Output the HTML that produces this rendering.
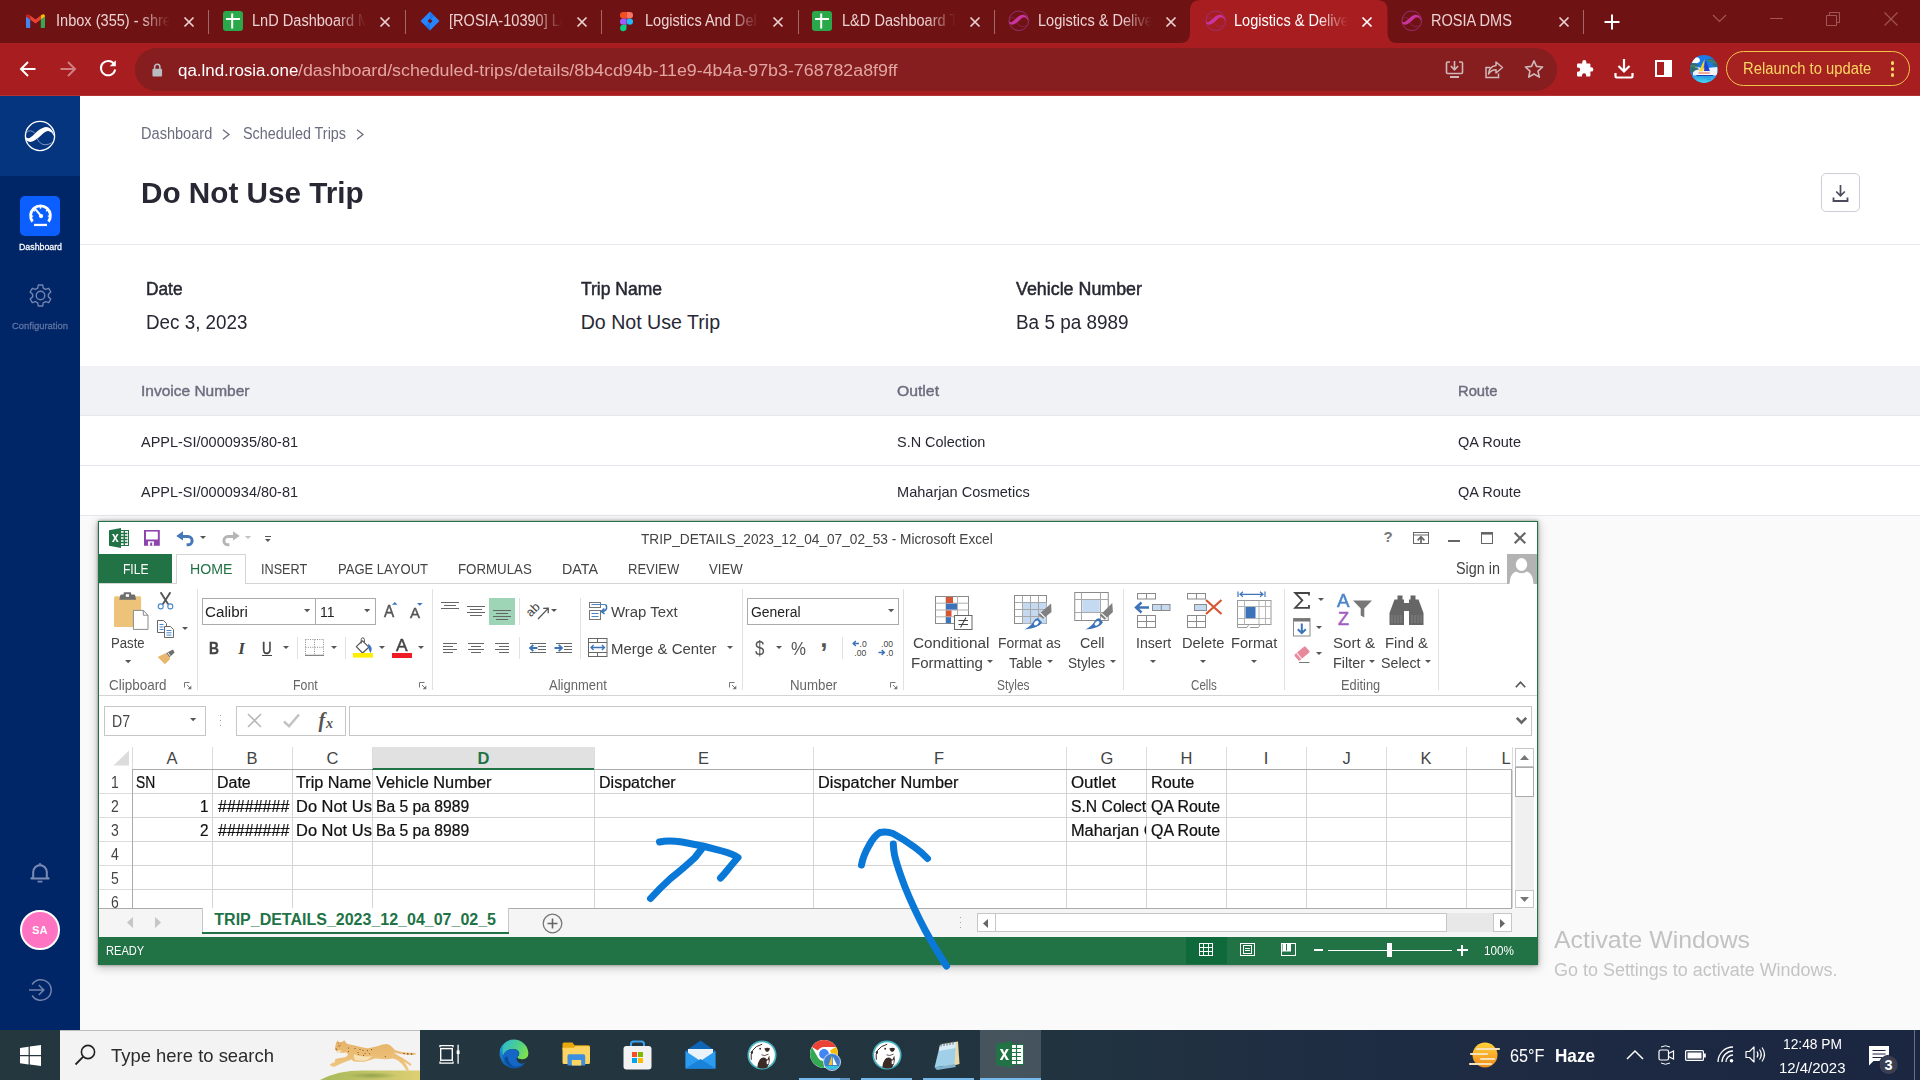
<!DOCTYPE html>
<html><head><meta charset="utf-8"><title>Do Not Use Trip</title>
<style>
html,body{margin:0;padding:0}
body{width:1920px;height:1080px;overflow:hidden;position:relative;background:#fff;font-family:"Liberation Sans",sans-serif;}
.a{position:absolute;display:block}
.t{position:absolute;white-space:pre;line-height:1;display:block}
svg{overflow:visible}
svg text{font-family:"Liberation Sans",sans-serif}
</style></head>
<body>
<div class="a" style="left:0px;top:96px;width:1920px;height:934px;background:#ffffff;"></div>
<div class="a" style="left:80px;top:516px;width:1840px;height:514px;background:#fafafa;"></div>
<div class="a" style="left:0px;top:96px;width:80px;height:934px;background:#002667;"></div>
<div class="a" style="left:0px;top:96px;width:80px;height:80px;background:#06357f;"></div>
<svg class="a" style="left:24px;top:119.9px" width="32" height="32" viewBox="0 0 32 32"><circle cx="16" cy="16" r="14.6" stroke="#fff" stroke-width="1.3" fill="none"/><path d="M1.3 16.5 Q3 19 5.5 18 Q8 16.8 11 13.5 Q15.5 8.5 20.6 7.2 Q26 6.5 29 11.8 Q30 14 30.1 16 L29.2 15.1 Q28.5 12 24.3 10.9 Q21.5 10.8 18 14.5 Q14 18.5 10.4 20.6 Q6 23.2 2.6 20.6 Q1.3 19 1.3 16.5Z" fill="#fff"/><path d="M2.6 12.3 Q6 9 10.9 13" stroke="#fff" stroke-width="0.6" fill="none" opacity="0.8"/><path d="M13.2 18.8 Q16 24.5 21 24.8 Q25 24.6 27.6 22.9" stroke="#fff" stroke-width="0.6" fill="none" opacity="0.8"/></svg>
<div class="a" style="left:20px;top:196px;width:40px;height:40px;background:#0b5fff;border-radius:5px;"></div>
<svg class="a" style="left:26.6px;top:202.3px" width="27" height="27" viewBox="0 0 24 24"><path d="M4.9 17.4 A8.8 8.8 0 1 1 19.1 17.4" stroke="#fff" stroke-width="2.5" fill="none"/><path d="M6.2 20.4 H17.8" stroke="#fff" stroke-width="2" fill="none"/><path d="M12.3 12.2 L7.8 6.8" stroke="#fff" stroke-width="1.8" fill="none" stroke-linecap="round"/><circle cx="12.5" cy="12.5" r="1.9" fill="#fff"/><path d="M12 4.2 V6 M5.8 7 L7 8.2 M18.2 7 L17 8.2 M3.8 12.5 H5.5 M20.2 12.5 H18.5" stroke="#fff" stroke-width="1.2" fill="none"/></svg>
<span class="t" style="left:18.50px;top:239px;font-size:9.8px;line-height:15px;color:#ffffff;-webkit-text-stroke:0.27px #ffffff;transform:scaleX(0.8970);transform-origin:0 0;">Dashboard</span>
<svg class="a" style="left:26.5px;top:281.6px" width="27" height="27" viewBox="0 0 24 24"><g stroke="#7283ad" stroke-width="1.25" fill="none" stroke-linejoin="round"><path d="M10.1 1.2 H13.9 L14.5 4.1 L16.5 5.2 L19.3 4.2 L21.2 7.5 L19 9.5 V11.8 L21.2 13.7 L19.3 17 L16.5 16 L14.5 17.1 L13.9 20 H10.1 L9.5 17.1 L7.5 16 L4.7 17 L2.8 13.7 L5 11.8 V9.5 L2.8 7.5 L4.7 4.2 L7.5 5.2 L9.5 4.1 Z" transform="translate(0,1.4)"/><circle cx="12" cy="12" r="3.8"/></g></svg>
<span class="t" style="left:12.00px;top:318px;font-size:9.4px;line-height:15px;color:#6074a3;-webkit-text-stroke:0.26px #6074a3;transform:scaleX(1.0042);transform-origin:0 0;">Configuration</span>
<svg class="a" style="left:30px;top:862px" width="20" height="22" viewBox="0 0 20 22"><path d="M3.2 15 V10 A6.8 6.8 0 0 1 16.8 10 V15 L18.6 16.6 H1.4 Z" stroke="#7b8bb3" stroke-width="2" fill="none" stroke-linejoin="round"/><path d="M7.5 19.6 H12.5" stroke="#7283ad" stroke-width="1.8" fill="none"/><circle cx="10" cy="2.2" r="1.2" fill="#7283ad"/></svg>
<div class="a" style="left:20px;top:910px;width:40px;height:40px;background:#ff73c3;border-radius:50%;border:2px solid #fff;box-sizing:border-box;"></div>
<span class="t" style="left:32.30px;top:922px;font-size:11.5px;line-height:16px;color:#ffffff;font-weight:700;transform:scaleX(0.9760);transform-origin:0 0;">SA</span>
<svg class="a" style="left:28px;top:978px" width="24" height="24" viewBox="0 0 24 24"><path d="M4.2 6.5 A10.3 10.3 0 1 1 4.2 17.5" stroke="#7283ad" stroke-width="1.5" fill="none"/><path d="M1 12 H15.5 M10.8 7 L15.8 12 L10.8 17" stroke="#7283ad" stroke-width="1.5" fill="none"/></svg>
<span class="t" style="left:140.50px;top:123px;font-size:16px;line-height:21px;color:#6b6c7e;transform:scaleX(0.9108);transform-origin:0 0;">Dashboard</span>
<svg class="a" style="left:222px;top:129px" width="9" height="11" viewBox="0 0 9 11"><path d="M1 0.8 L7 5.5 L1 10.2" stroke="#6b6c7e" stroke-width="1.3" fill="none"/></svg>
<span class="t" style="left:242.50px;top:123px;font-size:16px;line-height:21px;color:#6b6c7e;transform:scaleX(0.8977);transform-origin:0 0;">Scheduled Trips</span>
<svg class="a" style="left:356px;top:129px" width="9" height="11" viewBox="0 0 9 11"><path d="M1 0.8 L7 5.5 L1 10.2" stroke="#6b6c7e" stroke-width="1.3" fill="none"/></svg>
<span class="t" style="left:141.30px;top:175px;font-size:29px;line-height:36px;color:#272833;font-weight:700;transform:scaleX(1.0238);transform-origin:0 0;">Do Not Use Trip</span>
<div class="a" style="left:1821px;top:173px;width:39px;height:39px;background:#fff;border:1px solid #cdced9;border-radius:5px;box-sizing:border-box;"></div>
<svg class="a" style="left:1832px;top:184px" width="17" height="19" viewBox="0 0 17 19"><path d="M8.5 1 V11.5 M4.2 7.5 L8.5 11.8 L12.8 7.5" stroke="#4b4c5b" stroke-width="1.7" fill="none"/><path d="M1.5 13.5 V17 H15.5 V13.5" stroke="#4b4c5b" stroke-width="1.8" fill="none"/></svg>
<div class="a" style="left:80px;top:244px;width:1840px;height:1px;background:#e7e7ed;"></div>
<span class="t" style="left:145.50px;top:277px;font-size:18px;line-height:24px;color:#272833;-webkit-text-stroke:0.50px #272833;transform:scaleX(0.9597);transform-origin:0 0;">Date</span>
<span class="t" style="left:145.50px;top:309px;font-size:19.6px;line-height:26px;color:#272833;transform:scaleX(0.9605);transform-origin:0 0;">Dec 3, 2023</span>
<span class="t" style="left:580.70px;top:277px;font-size:18px;line-height:24px;color:#272833;-webkit-text-stroke:0.50px #272833;transform:scaleX(0.9717);transform-origin:0 0;">Trip Name</span>
<span class="t" style="left:580.70px;top:309px;font-size:19.6px;line-height:26px;color:#272833;">Do Not Use Trip</span>
<span class="t" style="left:1015.70px;top:277px;font-size:18px;line-height:24px;color:#272833;-webkit-text-stroke:0.50px #272833;transform:scaleX(0.9915);transform-origin:0 0;">Vehicle Number</span>
<span class="t" style="left:1015.70px;top:309px;font-size:19.6px;line-height:26px;color:#272833;transform:scaleX(0.9659);transform-origin:0 0;">Ba 5 pa 8989</span>
<div class="a" style="left:80px;top:366px;width:1840px;height:49px;background:#f1f2f5;"></div>
<div class="a" style="left:80px;top:415px;width:1840px;height:1px;background:#e7e7ed;"></div>
<div class="a" style="left:80px;top:465px;width:1840px;height:1px;background:#e7e7ed;"></div>
<div class="a" style="left:80px;top:515px;width:1840px;height:1px;background:#e7e7ed;"></div>
<span class="t" style="left:141.30px;top:381px;font-size:14.6px;line-height:20px;color:#6b6c7e;-webkit-text-stroke:0.41px #6b6c7e;transform:scaleX(1.0616);transform-origin:0 0;">Invoice Number</span>
<span class="t" style="left:897.30px;top:381px;font-size:14.6px;line-height:20px;color:#6b6c7e;-webkit-text-stroke:0.41px #6b6c7e;transform:scaleX(1.0787);transform-origin:0 0;">Outlet</span>
<span class="t" style="left:1458.10px;top:381px;font-size:14.6px;line-height:20px;color:#6b6c7e;-webkit-text-stroke:0.41px #6b6c7e;transform:scaleX(1.0115);transform-origin:0 0;">Route</span>
<span class="t" style="left:141.30px;top:432px;font-size:14.8px;line-height:20px;color:#272833;transform:scaleX(0.9787);transform-origin:0 0;">APPL-SI/0000935/80-81</span>
<span class="t" style="left:897.30px;top:432px;font-size:14.8px;line-height:20px;color:#272833;transform:scaleX(0.9771);transform-origin:0 0;">S.N Colection</span>
<span class="t" style="left:1458.10px;top:432px;font-size:14.8px;line-height:20px;color:#272833;transform:scaleX(0.9817);transform-origin:0 0;">QA Route</span>
<span class="t" style="left:141.30px;top:482px;font-size:14.8px;line-height:20px;color:#272833;transform:scaleX(0.9787);transform-origin:0 0;">APPL-SI/0000934/80-81</span>
<span class="t" style="left:897.30px;top:482px;font-size:14.8px;line-height:20px;color:#272833;transform:scaleX(0.9839);transform-origin:0 0;">Maharjan Cosmetics</span>
<span class="t" style="left:1458.10px;top:482px;font-size:14.8px;line-height:20px;color:#272833;transform:scaleX(0.9817);transform-origin:0 0;">QA Route</span>
<span class="t" style="left:1554.30px;top:924px;font-size:24.5px;line-height:31px;color:#c2c2c2;transform:scaleX(1.0137);transform-origin:0 0;">Activate Windows</span>
<span class="t" style="left:1554.30px;top:958px;font-size:18px;line-height:24px;color:#c4c4c4;transform:scaleX(0.9977);transform-origin:0 0;">Go to Settings to activate Windows.</span>
<div class="a" style="left:98px;top:521px;width:1440px;height:444px;background:#ffffff;box-shadow:0 0 3px rgba(0,0,0,0.42),0 2px 9px 1px rgba(0,0,0,0.22);border:1px solid #217346;box-sizing:border-box;"></div>
<svg class="a" style="left:108.5px;top:528px" width="21" height="20" viewBox="0 0 21 20"><rect x="9" y="2.5" width="10.5" height="15" fill="#fff" stroke="#217346" stroke-width="1"/><path d="M12 5.5 H18.5 M12 8.5 H18.5 M12 11.5 H18.5 M12 14.5 H18.5 M15.3 3 V17" stroke="#217346" stroke-width="1.35" fill="none"/><path d="M0 2.2 L12 0 V20 L0 17.8 Z" fill="#217346"/><path d="M3 6 L5 6 L6.3 8.8 L7.7 6 L9.6 6 L7.3 10 L9.7 14 L7.7 14 L6.3 11.2 L4.9 14 L2.9 14 L5.3 10 Z" fill="#fff"/></svg>
<svg class="a" style="left:144.2px;top:530px" width="15.8" height="15.8" viewBox="0 0 16 16"><path d="M0 0 H16 V16 H0 Z" fill="#8e44ad"/><rect x="2" y="1.6" width="12" height="8" fill="#fff"/><rect x="4" y="11.5" width="6" height="4.5" fill="#fff"/><rect x="6.3" y="12.8" width="2" height="3.2" fill="#8e44ad"/></svg>
<svg class="a" style="left:176px;top:529.7px" width="19" height="18" viewBox="0 0 19 18"><path d="M5 6.6 H12 A4.1 4.1 0 0 1 12 14.8 H10.6" stroke="#4478b8" stroke-width="3" fill="none"/><path d="M0.25 6 L7 1.3 V10.6 Z" fill="#4478b8"/></svg>
<svg class="a" style="left:200.0px;top:535.8px" width="6.0" height="3.1" viewBox="0 0 7 3.6"><path d="M0 0 H7 L3.5 3.6 Z" fill="#555"/></svg>
<svg class="a" style="left:220.5px;top:529.7px" width="19" height="18" viewBox="0 0 19 18"><path d="M14 6.6 H7 A4.1 4.1 0 0 0 7 14.8 H8.4" stroke="#b5b5b5" stroke-width="3" fill="none"/><path d="M18.75 6 L12 1.3 V10.6 Z" fill="#b5b5b5"/></svg>
<svg class="a" style="left:245.0px;top:535.8px" width="6.0" height="3.1" viewBox="0 0 7 3.6"><path d="M0 0 H7 L3.5 3.6 Z" fill="#c0c0c0"/></svg>
<div class="a" style="left:265px;top:536px;width:6px;height:1px;background:#555;"></div>
<svg class="a" style="left:265.2px;top:539.1px" width="5.6" height="2.9" viewBox="0 0 7 3.6"><path d="M0 0 H7 L3.5 3.6 Z" fill="#555"/></svg>
<span class="t" style="left:640.80px;top:528px;font-size:15.2px;line-height:21px;color:#444444;transform:scaleX(0.9004);transform-origin:0 0;">TRIP_DETAILS_2023_12_04_07_02_53 - Microsoft Excel</span>
<span class="t" style="left:1383.50px;top:526px;font-size:15px;line-height:21px;color:#777;font-weight:700;">?</span>
<svg class="a" style="left:1413px;top:532px" width="16" height="12" viewBox="0 0 16 12"><rect x="0.5" y="0.5" width="15" height="11" stroke="#666" fill="none"/><path d="M0.5 3 H15.5" stroke="#666" fill="none"/><path d="M8 11 V5 M4.6 8.3 L8 4.8 L11.4 8.3" stroke="#666" stroke-width="1.7" fill="none"/></svg>
<div class="a" style="left:1448px;top:540px;width:12px;height:2px;background:#666;"></div>
<svg class="a" style="left:1481px;top:532px" width="12" height="12" viewBox="0 0 12 12"><rect x="0.5" y="0.5" width="11" height="11" stroke="#666" fill="none"/><rect x="0" y="0" width="12" height="2.6" fill="#666"/></svg>
<svg class="a" style="left:1514px;top:532px" width="12" height="12" viewBox="0 0 12 12"><path d="M0.7 0.7 L11.3 11.3 M11.3 0.7 L0.7 11.3" stroke="#666" stroke-width="2.2" fill="none"/></svg>
<div class="a" style="left:99px;top:554px;width:73px;height:29px;background:#217346;"></div>
<span class="t" style="left:122.50px;top:558px;font-size:15.4px;line-height:21px;color:#fff;transform:scaleX(0.7842);transform-origin:0 0;">FILE</span>
<div class="a" style="left:99px;top:583px;width:1438px;height:1px;background:#d4d4d4;"></div>
<div class="a" style="left:176px;top:554px;width:70px;height:30px;background:#fff;border:1px solid #d4d4d4;border-bottom:none;box-sizing:border-box;"></div>
<span class="t" style="left:189.50px;top:558px;font-size:15.4px;line-height:21px;color:#217346;transform:scaleX(0.9202);transform-origin:0 0;">HOME</span>
<span class="t" style="left:261.30px;top:558px;font-size:15.4px;line-height:21px;color:#444444;transform:scaleX(0.8225);transform-origin:0 0;">INSERT</span>
<span class="t" style="left:337.50px;top:558px;font-size:15.4px;line-height:21px;color:#444444;transform:scaleX(0.8463);transform-origin:0 0;">PAGE LAYOUT</span>
<span class="t" style="left:457.50px;top:558px;font-size:15.4px;line-height:21px;color:#444444;transform:scaleX(0.8630);transform-origin:0 0;">FORMULAS</span>
<span class="t" style="left:561.50px;top:558px;font-size:15.4px;line-height:21px;color:#444444;transform:scaleX(0.9287);transform-origin:0 0;">DATA</span>
<span class="t" style="left:627.50px;top:558px;font-size:15.4px;line-height:21px;color:#444444;transform:scaleX(0.8449);transform-origin:0 0;">REVIEW</span>
<span class="t" style="left:708.80px;top:558px;font-size:15.4px;line-height:21px;color:#444444;transform:scaleX(0.8566);transform-origin:0 0;">VIEW</span>
<span class="t" style="left:1455.50px;top:558px;font-size:15.6px;line-height:21px;color:#444444;transform:scaleX(0.9227);transform-origin:0 0;">Sign in</span>
<svg class="a" style="left:1507px;top:554px" width="30" height="30" viewBox="0 0 30 30"><rect width="30" height="30" fill="#b3b3b3"/><ellipse cx="14.5" cy="10.5" rx="5.7" ry="6.5" fill="#fff"/><path d="M2.5 30 Q3 19.5 9 17.5 Q14.5 21 20 17.5 Q26 19.5 26.5 30 Z" fill="#fff"/></svg>
<div class="a" style="left:99px;top:695px;width:1438px;height:1px;background:#d4d4d4;"></div>
<svg class="a" style="left:113px;top:591px" width="37" height="40" viewBox="0 0 37 40"><rect x="1" y="5.3" width="27.1" height="30.6" rx="1.5" fill="#ecc379"/><path d="M6.3 8.8 L7.3 4.2 Q7.5 3.5 8.2 3.5 H10.6 V2 Q10.6 1.2 11.4 1.2 H17.3 Q18.1 1.2 18.1 2 V3.5 H21.2 Q21.9 3.5 22.1 4.2 L23.1 8.8 Z" fill="#6e6e6e"/><rect x="12.8" y="3.2" width="3.2" height="2.6" fill="#fff"/><path d="M20.4 19.4 H30.3 L35 24.2 V38.4 H20.4 Z" fill="#fff" stroke="#8a8a8a" stroke-width="1"/><path d="M30.3 19.4 V24.2 H35" fill="none" stroke="#8a8a8a" stroke-width="1"/></svg>
<span class="t" style="left:110.80px;top:632px;font-size:15.2px;line-height:21px;color:#444444;transform:scaleX(0.8650);transform-origin:0 0;">Paste</span>
<svg class="a" style="left:124.8px;top:659.7px" width="6.3" height="3.2" viewBox="0 0 7 3.6"><path d="M0 0 H7 L3.5 3.6 Z" fill="#555"/></svg>
<svg class="a" style="left:157px;top:592px" width="17" height="18" viewBox="0 0 17 18"><path d="M3.6 0.3 L11.2 12.3 M13.4 0.3 L5.8 12.3" stroke="#555" stroke-width="1.9" fill="none"/><circle cx="3.7" cy="14.4" r="2.5" stroke="#4a86c8" stroke-width="1.1" fill="none"/><circle cx="13.3" cy="14.4" r="2.5" stroke="#4a86c8" stroke-width="1.1" fill="none"/></svg>
<svg class="a" style="left:157px;top:620px" width="18" height="19" viewBox="0 0 18 19"><path d="M0.5 0.5 H6.5 L9.5 3.5 V12.5 H0.5 Z" fill="#fff" stroke="#666" stroke-width="1"/><path d="M2.5 4.5 H6.5 M2.5 7 H6.5 M2.5 9.5 H6.5" stroke="#4a86c8" stroke-width="1" fill="none"/><path d="M7.5 6.5 H13.5 L16.5 9.5 V17.5 H7.5 Z" fill="#fff" stroke="#666" stroke-width="1"/><path d="M9.5 10.5 H14.5 M9.5 12.8 H14.5 M9.5 15.1 H14.5" stroke="#4a86c8" stroke-width="1" fill="none"/></svg>
<svg class="a" style="left:182.0px;top:627.3px" width="6.0" height="3.1" viewBox="0 0 7 3.6"><path d="M0 0 H7 L3.5 3.6 Z" fill="#555"/></svg>
<svg class="a" style="left:157px;top:649px" width="19" height="16" viewBox="157 649 19 16"><path d="M166.1 653.1 L173 649.4 L174.6 652.5 L169.3 657.6 Z" fill="#6e6e6e"/><path d="M167.6 652.2 L170.4 656.4" stroke="#fff" stroke-width="0.9"/><path d="M157.7 656.9 L166.1 653.1 L170.4 658.7 L164.9 664.2 Z" fill="#e9b66e"/></svg>
<span class="t" style="left:108.70px;top:675px;font-size:14.3px;line-height:20px;color:#666666;transform:scaleX(0.9411);transform-origin:0 0;">Clipboard</span>
<svg class="a" style="left:184.0px;top:682.3px" width="8" height="8" viewBox="0 0 8 8"><path d="M0.5 5.5 V0.5 H5.5" stroke="#777" stroke-width="1" fill="none"/><path d="M3 3 L6 6" stroke="#777" stroke-width="1" fill="none"/><path d="M7.3 3.6 V7.3 H3.6 Z" fill="#777"/></svg>
<div class="a" style="left:197px;top:589px;width:1px;height:101px;background:#e1e1e1;"></div>
<div class="a" style="left:202px;top:598px;width:114px;height:27px;background:#fff;border:1px solid #ababab;box-sizing:border-box;"></div>
<div class="a" style="left:315px;top:598px;width:61px;height:27px;background:#fff;border:1px solid #ababab;box-sizing:border-box;"></div>
<span class="t" style="left:205.00px;top:601px;font-size:15.4px;line-height:21px;color:#222;transform:scaleX(0.9857);transform-origin:0 0;">Calibri</span>
<svg class="a" style="left:304.4px;top:609.2px" width="6.3" height="3.2" viewBox="0 0 7 3.6"><path d="M0 0 H7 L3.5 3.6 Z" fill="#555"/></svg>
<span class="t" style="left:320.00px;top:601px;font-size:15.4px;line-height:21px;color:#222;transform:scaleX(0.9071);transform-origin:0 0;">11</span>
<svg class="a" style="left:364.4px;top:609.2px" width="6.3" height="3.2" viewBox="0 0 7 3.6"><path d="M0 0 H7 L3.5 3.6 Z" fill="#555"/></svg>
<span class="t" style="left:384.30px;top:601px;font-size:15.8px;line-height:21px;color:#555;-webkit-text-stroke:0.44px #555;transform:scaleX(0.9671);transform-origin:0 0;">A</span>
<svg class="a" style="left:392.3px;top:602.2px" width="5.6" height="2.8" viewBox="0 0 6 3"><path d="M0 3 L3 0 L6 3 Z" fill="#3c73b9"/></svg>
<span class="t" style="left:409.50px;top:602px;font-size:15.2px;line-height:21px;color:#555;-webkit-text-stroke:0.43px #555;transform:scaleX(0.9861);transform-origin:0 0;">A</span>
<svg class="a" style="left:417.3px;top:603.2px" width="5.6" height="2.8" viewBox="0 0 6 3"><path d="M0 0 L3 3 L6 0 Z" fill="#3c73b9"/></svg>
<span class="t" style="left:209.40px;top:637px;font-size:16.2px;line-height:22px;color:#444;font-weight:700;transform:scaleX(0.8545);transform-origin:0 0;-webkit-text-stroke:0.3px #444;">B</span>
<span class="t" style="left:238.30px;top:637px;font-size:17px;line-height:23px;color:#444;font-weight:700;font-style:italic;font-family:'Liberation Serif',serif;">I</span>
<span class="t" style="left:261.50px;top:638px;font-size:15.6px;line-height:21px;color:#444;-webkit-text-stroke:0.44px #444;transform:scaleX(0.8521);transform-origin:0 0;">U</span>
<div class="a" style="left:261.5px;top:655.2px;width:10px;height:1.1px;background:#444;"></div>
<svg class="a" style="left:282.8px;top:646.0px" width="6.0" height="3.1" viewBox="0 0 7 3.6"><path d="M0 0 H7 L3.5 3.6 Z" fill="#555"/></svg>
<div class="a" style="left:297px;top:637px;width:1px;height:22px;background:#e1e1e1;"></div>
<svg class="a" style="left:305px;top:638.5px" width="19" height="17" viewBox="0 0 19 17"><path d="M0.5 0.5 H18.5 M0.5 0.5 V16 M18.5 0.5 V16 M9.5 0.5 V16 M0.5 8.3 H18.5" stroke="#8a8a8a" stroke-width="1" stroke-dasharray="1 1.3" fill="none"/><path d="M0 16.3 H19" stroke="#666" stroke-width="1"/></svg>
<svg class="a" style="left:330.8px;top:646.0px" width="6.0" height="3.1" viewBox="0 0 7 3.6"><path d="M0 0 H7 L3.5 3.6 Z" fill="#555"/></svg>
<div class="a" style="left:345px;top:637px;width:1px;height:22px;background:#e1e1e1;"></div>
<svg class="a" style="left:353px;top:637px" width="21" height="21" viewBox="0 0 21 21"><path d="M9.5 3.8 L15.8 10.2 L9.6 16 L3.3 9.6 Z" fill="#fff" stroke="#555" stroke-width="1.2" stroke-linejoin="round"/><path d="M8.2 6.5 V2.6 Q8.2 0.8 9.8 0.8 Q11.4 0.8 11.4 2.6 V5.6" stroke="#555" stroke-width="1" fill="none"/><path d="M15 6.8 Q20.6 10 17.6 16 Q15.2 13 15 6.8Z" fill="#3c73b9"/><rect x="0" y="16" width="20" height="4.6" fill="#ffee00"/></svg>
<svg class="a" style="left:378.8px;top:646.0px" width="6.0" height="3.1" viewBox="0 0 7 3.6"><path d="M0 0 H7 L3.5 3.6 Z" fill="#555"/></svg>
<span class="t" style="left:396.00px;top:633px;font-size:17.2px;line-height:24px;color:#444;-webkit-text-stroke:0.48px #444;transform:scaleX(1.0114);transform-origin:0 0;">A</span>
<div class="a" style="left:392px;top:653px;width:20px;height:4.6px;background:#ee1c25;"></div>
<svg class="a" style="left:417.8px;top:646.0px" width="6.0" height="3.1" viewBox="0 0 7 3.6"><path d="M0 0 H7 L3.5 3.6 Z" fill="#555"/></svg>
<span class="t" style="left:293.30px;top:675px;font-size:14.3px;line-height:20px;color:#666666;transform:scaleX(0.8634);transform-origin:0 0;">Font</span>
<svg class="a" style="left:419.0px;top:682.3px" width="8" height="8" viewBox="0 0 8 8"><path d="M0.5 5.5 V0.5 H5.5" stroke="#777" stroke-width="1" fill="none"/><path d="M3 3 L6 6" stroke="#777" stroke-width="1" fill="none"/><path d="M7.3 3.6 V7.3 H3.6 Z" fill="#777"/></svg>
<div class="a" style="left:432px;top:589px;width:1px;height:101px;background:#e1e1e1;"></div>
<div class="a" style="left:489px;top:598px;width:26px;height:27px;background:#9fd5b7;"></div>
<div class="a" style="left:441px;top:602px;width:18px;height:1px;background:#666;"></div>
<div class="a" style="left:444px;top:605px;width:12px;height:1px;background:#666;"></div>
<div class="a" style="left:441px;top:608px;width:18px;height:1px;background:#666;"></div>
<div class="a" style="left:467px;top:606px;width:18px;height:1px;background:#666;"></div>
<div class="a" style="left:470px;top:609px;width:12px;height:1px;background:#666;"></div>
<div class="a" style="left:467px;top:612px;width:18px;height:1px;background:#666;"></div>
<div class="a" style="left:470px;top:615px;width:12px;height:1px;background:#666;"></div>
<div class="a" style="left:493px;top:610px;width:18px;height:1px;background:#666;"></div>
<div class="a" style="left:496px;top:613px;width:12px;height:1px;background:#666;"></div>
<div class="a" style="left:493px;top:616px;width:18px;height:1px;background:#666;"></div>
<div class="a" style="left:496px;top:619px;width:12px;height:1px;background:#666;"></div>
<div class="a" style="left:519px;top:598px;width:1px;height:27px;background:#e1e1e1;"></div>
<svg class="a" style="left:528.3px;top:597.5px" width="24" height="24" viewBox="0 0 24 24"><g transform="rotate(-45 6 17)"><text x="2" y="16.5" font-size="12.5" fill="#444">ab</text></g><path d="M10 21 L20 10.6 M15.2 10.3 L20.3 10.2 L20.2 15.3" stroke="#555" stroke-width="1.3" fill="none"/></svg>
<svg class="a" style="left:550.8px;top:609.3px" width="6.0" height="3.1" viewBox="0 0 7 3.6"><path d="M0 0 H7 L3.5 3.6 Z" fill="#555"/></svg>
<div class="a" style="left:443px;top:643px;width:14px;height:1px;background:#666;"></div>
<div class="a" style="left:443px;top:646px;width:10px;height:1px;background:#666;"></div>
<div class="a" style="left:443px;top:649px;width:14px;height:1px;background:#666;"></div>
<div class="a" style="left:443px;top:652px;width:10px;height:1px;background:#666;"></div>
<div class="a" style="left:468px;top:643px;width:16px;height:1px;background:#666;"></div>
<div class="a" style="left:471px;top:646px;width:10px;height:1px;background:#666;"></div>
<div class="a" style="left:468px;top:649px;width:16px;height:1px;background:#666;"></div>
<div class="a" style="left:471px;top:652px;width:10px;height:1px;background:#666;"></div>
<div class="a" style="left:495px;top:643px;width:14px;height:1px;background:#666;"></div>
<div class="a" style="left:499px;top:646px;width:10px;height:1px;background:#666;"></div>
<div class="a" style="left:495px;top:649px;width:14px;height:1px;background:#666;"></div>
<div class="a" style="left:499px;top:652px;width:10px;height:1px;background:#666;"></div>
<div class="a" style="left:519px;top:637px;width:1px;height:22px;background:#e1e1e1;"></div>
<div class="a" style="left:530px;top:643px;width:16px;height:1px;background:#666;"></div>
<div class="a" style="left:538px;top:646px;width:8px;height:1px;background:#666;"></div>
<div class="a" style="left:538px;top:649px;width:8px;height:1px;background:#666;"></div>
<div class="a" style="left:530px;top:652px;width:16px;height:1px;background:#666;"></div>
<svg class="a" style="left:528.5px;top:644px" width="9" height="8" viewBox="0 0 9 8"><path d="M8.5 4 H1.5 M4.3 0.8 L1 4 L4.3 7.2" stroke="#3c73b9" stroke-width="1.8" fill="none"/></svg>
<div class="a" style="left:556px;top:643px;width:16px;height:1px;background:#666;"></div>
<div class="a" style="left:564px;top:646px;width:8px;height:1px;background:#666;"></div>
<div class="a" style="left:564px;top:649px;width:8px;height:1px;background:#666;"></div>
<div class="a" style="left:556px;top:652px;width:16px;height:1px;background:#666;"></div>
<svg class="a" style="left:554.3px;top:644px" width="9" height="8" viewBox="0 0 9 8"><path d="M0.5 4 H7.5 M4.7 0.8 L8 4 L4.7 7.2" stroke="#3c73b9" stroke-width="1.8" fill="none"/></svg>
<div class="a" style="left:580px;top:598px;width:1px;height:61px;background:#e1e1e1;"></div>
<svg class="a" style="left:588px;top:601px" width="22" height="20" viewBox="588 601 22 20"><rect x="589.5" y="602.5" width="11" height="5" fill="#fff" stroke="#777" stroke-width="1"/><rect x="589.5" y="610.5" width="11" height="9" fill="#fff" stroke="#777" stroke-width="1"/><path d="M591.5 604.5 H605.5 M591.5 613.5 H598.5 M591.5 616.5 H598.5" stroke="#4a86c8" stroke-width="1" fill="none"/><path d="M605.5 604.5 Q608.6 608.5 603.8 611.3 H602 M604.3 608.6 L601.2 611.4 L604.6 613.8" stroke="#3c73b9" stroke-width="1.5" fill="none"/></svg>
<span class="t" style="left:611.30px;top:601px;font-size:15.4px;line-height:21px;color:#444444;transform:scaleX(0.9706);transform-origin:0 0;">Wrap Text</span>
<svg class="a" style="left:588px;top:638px" width="20" height="19" viewBox="0 0 20 19"><rect x="0.5" y="0.5" width="18.5" height="18" fill="#fff" stroke="#666"/><path d="M0.5 4.5 H19 M0.5 14.5 H19 M9.5 0.5 V4.5 M9.5 14.5 V18.5" stroke="#666" fill="none"/><path d="M3 9.5 H16.5 M5.6 7 L3 9.5 L5.6 12 M13.9 7 L16.5 9.5 L13.9 12" stroke="#3c73b9" stroke-width="1.3" fill="none"/></svg>
<span class="t" style="left:611.30px;top:638px;font-size:15.4px;line-height:21px;color:#444444;transform:scaleX(0.9711);transform-origin:0 0;">Merge &amp; Center</span>
<svg class="a" style="left:727.0px;top:646.0px" width="6.0" height="3.1" viewBox="0 0 7 3.6"><path d="M0 0 H7 L3.5 3.6 Z" fill="#555"/></svg>
<span class="t" style="left:549.00px;top:675px;font-size:14.3px;line-height:20px;color:#666666;transform:scaleX(0.9091);transform-origin:0 0;">Alignment</span>
<svg class="a" style="left:729.0px;top:682.3px" width="8" height="8" viewBox="0 0 8 8"><path d="M0.5 5.5 V0.5 H5.5" stroke="#777" stroke-width="1" fill="none"/><path d="M3 3 L6 6" stroke="#777" stroke-width="1" fill="none"/><path d="M7.3 3.6 V7.3 H3.6 Z" fill="#777"/></svg>
<div class="a" style="left:742px;top:589px;width:1px;height:101px;background:#e1e1e1;"></div>
<div class="a" style="left:747px;top:598px;width:152px;height:27px;background:#fff;border:1px solid #ababab;box-sizing:border-box;"></div>
<span class="t" style="left:750.50px;top:601px;font-size:15.4px;line-height:21px;color:#222;transform:scaleX(0.9039);transform-origin:0 0;">General</span>
<svg class="a" style="left:887.6px;top:609.2px" width="6.3" height="3.2" viewBox="0 0 7 3.6"><path d="M0 0 H7 L3.5 3.6 Z" fill="#555"/></svg>
<span class="t" style="left:754.90px;top:635px;font-size:19.5px;line-height:26px;color:#555;transform:scaleX(0.8656);transform-origin:0 0;">$</span>
<svg class="a" style="left:775.8px;top:646.0px" width="6.0" height="3.1" viewBox="0 0 7 3.6"><path d="M0 0 H7 L3.5 3.6 Z" fill="#555"/></svg>
<span class="t" style="left:791.10px;top:636px;font-size:19px;line-height:25px;color:#555;transform:scaleX(0.8872);transform-origin:0 0;">%</span>
<span class="t" style="left:820.30px;top:621px;font-size:26px;line-height:34px;color:#555;font-weight:700;">,</span>
<div class="a" style="left:842px;top:637px;width:1px;height:22px;background:#e1e1e1;"></div>
<svg class="a" style="left:851.5px;top:639px" width="17" height="18" viewBox="0 0 17 18"><path d="M7 4.5 H1.5 M3.8 2 L1.2 4.5 L3.8 7" stroke="#3c73b9" stroke-width="1.5" fill="none"/><text x="7.5" y="7.8" font-family="Liberation Sans" font-size="8.6" fill="#444">.0</text><text x="2.3" y="16.8" font-family="Liberation Sans" font-size="8.6" fill="#444">.00</text></svg>
<svg class="a" style="left:877.5px;top:639px" width="17" height="18" viewBox="0 0 17 18"><text x="3" y="7.8" font-family="Liberation Sans" font-size="8.6" fill="#444">.00</text><path d="M0.5 13.5 H6 M3.7 11 L6.3 13.5 L3.7 16" stroke="#3c73b9" stroke-width="1.5" fill="none"/><text x="8" y="16.8" font-family="Liberation Sans" font-size="8.6" fill="#444">.0</text></svg>
<span class="t" style="left:789.50px;top:675px;font-size:14.3px;line-height:20px;color:#666666;transform:scaleX(0.9300);transform-origin:0 0;">Number</span>
<svg class="a" style="left:889.8px;top:682.3px" width="8" height="8" viewBox="0 0 8 8"><path d="M0.5 5.5 V0.5 H5.5" stroke="#777" stroke-width="1" fill="none"/><path d="M3 3 L6 6" stroke="#777" stroke-width="1" fill="none"/><path d="M7.3 3.6 V7.3 H3.6 Z" fill="#777"/></svg>
<div class="a" style="left:903px;top:589px;width:1px;height:101px;background:#e1e1e1;"></div>
<svg class="a" style="left:935px;top:596px" width="38" height="34" viewBox="0 0 38 34"><rect x="0.5" y="0.5" width="33" height="27" fill="#fff" stroke="#8a8a8a"/><path d="M0.5 7.2 H33.5 M0.5 14 H33.5 M0.5 20.8 H33.5 M11 0.5 V27.5 M22.5 0.5 V27.5" stroke="#b0b0b0" fill="none"/><rect x="11" y="1" width="7" height="6" fill="#d65532"/><rect x="11" y="7.6" width="11" height="6" fill="#3c73b9"/><rect x="11" y="14.4" width="5.5" height="6" fill="#d65532"/><rect x="11" y="21.2" width="5" height="6" fill="#3c73b9"/><rect x="19.5" y="19.5" width="17.5" height="14" fill="#fff" stroke="#666"/><path d="M23.5 24.5 H33 M23.5 28.5 H33 M31 21.5 L25.5 31.5" stroke="#444" stroke-width="1.1"/></svg>
<span class="t" style="left:913.00px;top:632px;font-size:15.4px;line-height:21px;color:#444444;transform:scaleX(0.9933);transform-origin:0 0;">Conditional</span>
<span class="t" style="left:910.50px;top:652px;font-size:15.4px;line-height:21px;color:#444444;transform:scaleX(0.9788);transform-origin:0 0;">Formatting</span>
<svg class="a" style="left:987.0px;top:659.5px" width="6.0" height="3.1" viewBox="0 0 7 3.6"><path d="M0 0 H7 L3.5 3.6 Z" fill="#555"/></svg>
<svg class="a" style="left:1014px;top:595px" width="39" height="36" viewBox="0 0 39 36"><rect x="0.5" y="0.5" width="32" height="28" fill="#fff" stroke="#8a8a8a"/><rect x="9" y="8" width="23.5" height="20.5" fill="#c5d9f1"/><path d="M0.5 7.5 H32.5 M0.5 14.5 H32.5 M0.5 21.5 H32.5 M8.5 0.5 V28.5 M16.5 0.5 V28.5 M24.5 0.5 V28.5" stroke="#a8a8a8" fill="none"/><path d="M37.1 8.5 L37.5 16.9 L29 23.75 L24.25 19.75 Z" fill="#808080"/><path d="M26.3 18 L30.8 22.3" stroke="#fff" stroke-width="1.1"/><path d="M24 23.3 L28 27.3 Q25.5 33 10.3 34.4 Q17 31 19.5 26.5 Q21.5 23 24 23.3Z" fill="#3c73b9"/><ellipse cx="22.3" cy="28" rx="2.8" ry="1.8" fill="#fff" transform="rotate(-40 22.3 28)"/></svg>
<span class="t" style="left:998.30px;top:632px;font-size:15.4px;line-height:21px;color:#444444;transform:scaleX(0.9050);transform-origin:0 0;">Format as</span>
<span class="t" style="left:1009.20px;top:652px;font-size:15.4px;line-height:21px;color:#444444;transform:scaleX(0.9023);transform-origin:0 0;">Table</span>
<svg class="a" style="left:1046.5px;top:659.5px" width="6.0" height="3.1" viewBox="0 0 7 3.6"><path d="M0 0 H7 L3.5 3.6 Z" fill="#555"/></svg>
<svg class="a" style="left:1073.5px;top:592px" width="40" height="38" viewBox="0 0 40 38"><rect x="0.75" y="0.5" width="33.5" height="28" fill="#fff" stroke="#8a8a8a"/><path d="M0.75 7.5 H34.25 M0.75 20.5 H34.25 M7.5 0.5 V28.5 M26.5 0.5 V28.5" stroke="#a8a8a8" fill="none"/><rect x="8.25" y="8" width="17.5" height="12" fill="#c5d9f1"/><path d="M38.25 11.1 L38.9 19.9 L30.75 27.75 L25.75 23.4 Z" fill="#808080"/><path d="M28 21.7 L32.6 26" stroke="#fff" stroke-width="1.1"/><path d="M25.3 26.3 L29 30.3 Q26 36.5 11.4 37.6 Q18 34 20.5 29.5 Q22.5 26 25.3 26.3Z" fill="#3c73b9"/><ellipse cx="23" cy="31.3" rx="2.8" ry="1.8" fill="#fff" transform="rotate(-40 23 31.3)"/></svg>
<span class="t" style="left:1080.00px;top:632px;font-size:15.4px;line-height:21px;color:#444444;transform:scaleX(0.9240);transform-origin:0 0;">Cell</span>
<span class="t" style="left:1068.30px;top:652px;font-size:15.4px;line-height:21px;color:#444444;transform:scaleX(0.8874);transform-origin:0 0;">Styles</span>
<svg class="a" style="left:1110.0px;top:659.5px" width="6.0" height="3.1" viewBox="0 0 7 3.6"><path d="M0 0 H7 L3.5 3.6 Z" fill="#555"/></svg>
<span class="t" style="left:997.00px;top:675px;font-size:14.3px;line-height:20px;color:#666666;transform:scaleX(0.8347);transform-origin:0 0;">Styles</span>
<div class="a" style="left:1123px;top:589px;width:1px;height:101px;background:#e1e1e1;"></div>
<svg class="a" style="left:1134px;top:593px" width="37" height="35" viewBox="0 0 37 35"><rect x="3.5" y="0.5" width="18" height="5.5" fill="#fff" stroke="#8a8a8a"/><path d="M12.5 0.5 V6" stroke="#8a8a8a"/><rect x="18.5" y="11.5" width="17.5" height="6" fill="#c5d9f1" stroke="#8a8a8a"/><path d="M27.3 11.5 V17.5" stroke="#8a8a8a"/><rect x="3.5" y="22.5" width="18" height="12" fill="#fff" stroke="#8a8a8a"/><path d="M12.5 22.5 V34.5 M3.5 28.5 H21.5" stroke="#8a8a8a"/><path d="M15 14.5 H2.5 M7.5 9.5 L2 14.5 L7.5 19.5" stroke="#3c73b9" stroke-width="2.4" fill="none"/></svg>
<span class="t" style="left:1135.50px;top:632px;font-size:15.4px;line-height:21px;color:#444444;transform:scaleX(0.9169);transform-origin:0 0;">Insert</span>
<svg class="a" style="left:1150.0px;top:659.8px" width="6.0" height="3.1" viewBox="0 0 7 3.6"><path d="M0 0 H7 L3.5 3.6 Z" fill="#555"/></svg>
<svg class="a" style="left:1186.5px;top:593px" width="37" height="35" viewBox="0 0 37 35"><rect x="0.5" y="0.5" width="18" height="5.5" fill="#fff" stroke="#8a8a8a"/><path d="M9.5 0.5 V6" stroke="#8a8a8a"/><rect x="7.5" y="11.5" width="12" height="6" fill="#c5d9f1" stroke="#8a8a8a"/><rect x="0.5" y="22.5" width="18" height="12" fill="#fff" stroke="#8a8a8a"/><path d="M9.5 22.5 V34.5 M0.5 28.5 H18.5" stroke="#8a8a8a"/><path d="M19 7 L34.5 21 M34.5 7 L19 21" stroke="#d65532" stroke-width="2.2" fill="none"/></svg>
<span class="t" style="left:1181.80px;top:632px;font-size:15.4px;line-height:21px;color:#444444;transform:scaleX(0.9551);transform-origin:0 0;">Delete</span>
<svg class="a" style="left:1200.0px;top:659.8px" width="6.0" height="3.1" viewBox="0 0 7 3.6"><path d="M0 0 H7 L3.5 3.6 Z" fill="#555"/></svg>
<svg class="a" style="left:1236.5px;top:591px" width="35" height="38" viewBox="0 0 35 38"><path d="M1 0.5 V6 M28 0.5 V6 M3 3.3 H26 M6 0.8 L3 3.3 L6 5.8 M23 0.8 L26 3.3 L23 5.8" stroke="#3c73b9" stroke-width="1.2" fill="none"/><rect x="0.5" y="9.5" width="33.5" height="24" fill="#fff" stroke="#9a9a9a"/><path d="M0.5 15.5 H34 M0.5 27.5 H34 M7.5 9.5 V33.5 M22 9.5 V33.5 M28.5 9.5 V33.5" stroke="#b5b5b5" fill="none"/><rect x="8.5" y="16" width="10" height="11" fill="#3c73b9"/><path d="M0.5 33.5 V36.5 H10 L11.5 34 M13 36.5 H21.5 L23 34" stroke="#9a9a9a" fill="none"/></svg>
<span class="t" style="left:1230.50px;top:632px;font-size:15.4px;line-height:21px;color:#444444;transform:scaleX(0.9497);transform-origin:0 0;">Format</span>
<svg class="a" style="left:1250.8px;top:659.8px" width="6.0" height="3.1" viewBox="0 0 7 3.6"><path d="M0 0 H7 L3.5 3.6 Z" fill="#555"/></svg>
<span class="t" style="left:1190.50px;top:675px;font-size:14.3px;line-height:20px;color:#666666;transform:scaleX(0.8118);transform-origin:0 0;">Cells</span>
<div class="a" style="left:1284px;top:589px;width:1px;height:101px;background:#e1e1e1;"></div>
<svg class="a" style="left:1293.5px;top:592px" width="16" height="17" viewBox="0 0 16 17"><path d="M15 3.5 V1 H1.2 L8.3 8.3 L1.2 15.8 H15 V13" stroke="#444" stroke-width="1.8" fill="none" stroke-linejoin="miter"/></svg>
<svg class="a" style="left:1317.8px;top:598.0px" width="6.0" height="3.1" viewBox="0 0 7 3.6"><path d="M0 0 H7 L3.5 3.6 Z" fill="#555"/></svg>
<svg class="a" style="left:1293px;top:618px" width="18" height="19" viewBox="0 0 18 19"><rect x="0.5" y="0.5" width="16.5" height="17.5" fill="#fff" stroke="#8a8a8a"/><rect x="0.5" y="0.5" width="16.5" height="3" fill="#777"/><path d="M8.8 5.5 V15 M4.8 11.2 L8.8 15.2 L12.8 11.2" stroke="#3c73b9" stroke-width="2" fill="none"/></svg>
<svg class="a" style="left:1315.8px;top:625.5px" width="6.0" height="3.1" viewBox="0 0 7 3.6"><path d="M0 0 H7 L3.5 3.6 Z" fill="#555"/></svg>
<svg class="a" style="left:1293px;top:644.5px" width="19" height="19" viewBox="0 0 19 19"><g transform="rotate(-40 9 8.5)"><rect x="1.8" y="4.6" width="14.4" height="7.8" rx="1.3" fill="#e8899b"/><rect x="4.6" y="4.6" width="1.3" height="7.8" fill="#fbe6ea"/></g><path d="M6 17.5 H16.5" stroke="#777" stroke-width="1"/></svg>
<svg class="a" style="left:1315.8px;top:652.0px" width="6.0" height="3.1" viewBox="0 0 7 3.6"><path d="M0 0 H7 L3.5 3.6 Z" fill="#555"/></svg>
<span class="t" style="left:1337.00px;top:589px;font-size:18px;line-height:24px;color:#4a86c8;-webkit-text-stroke:0.50px #4a86c8;transform:scaleX(1.0403);transform-origin:0 0;">A</span>
<span class="t" style="left:1338.00px;top:607px;font-size:18px;line-height:24px;color:#a25bc0;-webkit-text-stroke:0.50px #a25bc0;">Z</span>
<svg class="a" style="left:1352.5px;top:600px" width="19" height="19" viewBox="0 0 19 19"><path d="M0 0.5 H19 L11.3 8.5 V17.5 L7.7 15.5 V8.5 Z" fill="#777"/></svg>
<span class="t" style="left:1332.50px;top:632px;font-size:15.4px;line-height:21px;color:#444444;transform:scaleX(0.9817);transform-origin:0 0;">Sort &amp;</span>
<span class="t" style="left:1332.50px;top:652px;font-size:15.4px;line-height:21px;color:#444444;transform:scaleX(0.9356);transform-origin:0 0;">Filter</span>
<svg class="a" style="left:1368.8px;top:659.8px" width="6.0" height="3.1" viewBox="0 0 7 3.6"><path d="M0 0 H7 L3.5 3.6 Z" fill="#555"/></svg>
<svg class="a" style="left:1388.5px;top:594px" width="35" height="32" viewBox="0 0 35 32"><path d="M8.5 1.5 H13.5 V5.5 H15 V31 H0.5 V19 L5.5 5.5 H8.5 Z" fill="#666"/><path d="M26.5 1.5 H21.5 V5.5 H20 V31 H34.5 V19 L29.5 5.5 H26.5 Z" fill="#666"/><rect x="14" y="9" width="7" height="8" fill="#666"/><path d="M3 21 V29 M6 21 V29 M9 21 V29 M12 21 V29 M23 21 V29 M26 21 V29 M29 21 V29 M32 21 V29" stroke="#8c8c8c" stroke-width="0.8"/></svg>
<span class="t" style="left:1384.50px;top:632px;font-size:15.4px;line-height:21px;color:#444444;transform:scaleX(0.9666);transform-origin:0 0;">Find &amp;</span>
<span class="t" style="left:1381.30px;top:652px;font-size:15.4px;line-height:21px;color:#444444;transform:scaleX(0.9233);transform-origin:0 0;">Select</span>
<svg class="a" style="left:1425.0px;top:659.8px" width="6.0" height="3.1" viewBox="0 0 7 3.6"><path d="M0 0 H7 L3.5 3.6 Z" fill="#555"/></svg>
<span class="t" style="left:1341.30px;top:675px;font-size:14.3px;line-height:20px;color:#666666;transform:scaleX(0.8966);transform-origin:0 0;">Editing</span>
<div class="a" style="left:1438px;top:589px;width:1px;height:101px;background:#e1e1e1;"></div>
<svg class="a" style="left:1515px;top:681px" width="11" height="7" viewBox="0 0 11 7"><path d="M0.8 6.2 L5.5 1.2 L10.2 6.2" stroke="#555" stroke-width="1.6" fill="none"/></svg>
<div class="a" style="left:104px;top:706px;width:102px;height:30px;background:#fff;border:1px solid #c6c6c6;box-sizing:border-box;"></div>
<span class="t" style="left:112.00px;top:711px;font-size:16px;line-height:21px;color:#444444;transform:scaleX(0.8801);transform-origin:0 0;">D7</span>
<svg class="a" style="left:190.2px;top:718.4px" width="6.3" height="3.2" viewBox="0 0 7 3.6"><path d="M0 0 H7 L3.5 3.6 Z" fill="#555"/></svg>
<div class="a" style="left:220.2px;top:715px;width:1.3px;height:1.3px;background:#a0a0a0;"></div>
<div class="a" style="left:220.2px;top:720px;width:1.3px;height:1.3px;background:#a0a0a0;"></div>
<div class="a" style="left:220.2px;top:725px;width:1.3px;height:1.3px;background:#a0a0a0;"></div>
<div class="a" style="left:236px;top:706px;width:110px;height:30px;background:#fff;border:1px solid #c6c6c6;box-sizing:border-box;"></div>
<svg class="a" style="left:247px;top:713px" width="15" height="15" viewBox="0 0 15 15"><path d="M1 1 L14 14 M14 1 L1 14" stroke="#b9b9b9" stroke-width="1.6" fill="none"/></svg>
<svg class="a" style="left:283px;top:713px" width="17" height="15" viewBox="0 0 17 15"><path d="M1 8.5 L6 13.3 L16 1.5" stroke="#c2c2c2" stroke-width="2.5" fill="none"/></svg>
<span class="t" style="left:318.50px;top:707px;font-size:20px;line-height:26px;color:#555;font-weight:700;font-style:italic;font-family:'Liberation Serif',serif;">f</span>
<span class="t" style="left:326.00px;top:714px;font-size:14px;line-height:19px;color:#555;font-weight:700;font-style:italic;font-family:'Liberation Serif',serif;">x</span>
<div class="a" style="left:349px;top:706px;width:1183px;height:30px;background:#fff;border:1px solid #c6c6c6;box-sizing:border-box;"></div>
<svg class="a" style="left:1516px;top:717px" width="11" height="7" viewBox="0 0 11 7"><path d="M0.8 0.8 L5.5 5.6 L10.2 0.8" stroke="#666" stroke-width="2.6" fill="none"/></svg>
<div class="a" style="left:372px;top:747px;width:222px;height:21px;background:#e1e1e1;"></div>
<div class="a" style="left:372px;top:767.5px;width:222px;height:2.5px;background:#217346;"></div>
<div class="a" style="left:132px;top:769px;width:240px;height:1px;background:#ababab;"></div>
<div class="a" style="left:594px;top:769px;width:918px;height:1px;background:#ababab;"></div>
<div class="a" style="left:132px;top:769px;width:1px;height:139px;background:#ababab;"></div>
<div class="a" style="left:132px;top:747px;width:1px;height:22px;background:#dcdcdc;"></div>
<svg class="a" style="left:113px;top:750px" width="17" height="16" viewBox="0 0 17 16"><path d="M16 0.5 V15.5 H0.5 Z" fill="#dcdcdc"/></svg>
<span class="t" style="left:166.50px;top:747px;font-size:16.5px;line-height:22px;color:#444444;">A</span>
<div class="a" style="left:212px;top:747px;width:1px;height:22px;background:#dcdcdc;"></div>
<div class="a" style="left:212px;top:770px;width:1px;height:138px;background:#d4d4d4;"></div>
<span class="t" style="left:246.50px;top:747px;font-size:16.5px;line-height:22px;color:#444444;">B</span>
<div class="a" style="left:292px;top:747px;width:1px;height:22px;background:#dcdcdc;"></div>
<div class="a" style="left:292px;top:770px;width:1px;height:138px;background:#d4d4d4;"></div>
<span class="t" style="left:326.50px;top:747px;font-size:16.5px;line-height:22px;color:#444444;">C</span>
<div class="a" style="left:372px;top:747px;width:1px;height:22px;background:#dcdcdc;"></div>
<div class="a" style="left:372px;top:770px;width:1px;height:138px;background:#d4d4d4;"></div>
<span class="t" style="left:477.50px;top:747px;font-size:16.5px;line-height:22px;color:#217346;font-weight:700;">D</span>
<div class="a" style="left:594px;top:747px;width:1px;height:22px;background:#dcdcdc;"></div>
<div class="a" style="left:594px;top:770px;width:1px;height:138px;background:#d4d4d4;"></div>
<span class="t" style="left:698.00px;top:747px;font-size:16.5px;line-height:22px;color:#444444;">E</span>
<div class="a" style="left:813px;top:747px;width:1px;height:22px;background:#dcdcdc;"></div>
<div class="a" style="left:813px;top:770px;width:1px;height:138px;background:#d4d4d4;"></div>
<span class="t" style="left:934.00px;top:747px;font-size:16.5px;line-height:22px;color:#444444;">F</span>
<div class="a" style="left:1066px;top:747px;width:1px;height:22px;background:#dcdcdc;"></div>
<div class="a" style="left:1066px;top:770px;width:1px;height:138px;background:#d4d4d4;"></div>
<span class="t" style="left:1100.50px;top:747px;font-size:16.5px;line-height:22px;color:#444444;">G</span>
<div class="a" style="left:1146px;top:747px;width:1px;height:22px;background:#dcdcdc;"></div>
<div class="a" style="left:1146px;top:770px;width:1px;height:138px;background:#d4d4d4;"></div>
<span class="t" style="left:1180.50px;top:747px;font-size:16.5px;line-height:22px;color:#444444;">H</span>
<div class="a" style="left:1226px;top:747px;width:1px;height:22px;background:#dcdcdc;"></div>
<div class="a" style="left:1226px;top:770px;width:1px;height:138px;background:#d4d4d4;"></div>
<span class="t" style="left:1263.75px;top:747px;font-size:16.5px;line-height:22px;color:#444444;">I</span>
<div class="a" style="left:1306px;top:747px;width:1px;height:22px;background:#dcdcdc;"></div>
<div class="a" style="left:1306px;top:770px;width:1px;height:138px;background:#d4d4d4;"></div>
<span class="t" style="left:1342.50px;top:747px;font-size:16.5px;line-height:22px;color:#444444;">J</span>
<div class="a" style="left:1386px;top:747px;width:1px;height:22px;background:#dcdcdc;"></div>
<div class="a" style="left:1386px;top:770px;width:1px;height:138px;background:#d4d4d4;"></div>
<span class="t" style="left:1420.50px;top:747px;font-size:16.5px;line-height:22px;color:#444444;">K</span>
<div class="a" style="left:1466px;top:747px;width:1px;height:22px;background:#dcdcdc;"></div>
<div class="a" style="left:1466px;top:770px;width:1px;height:138px;background:#d4d4d4;"></div>
<span class="t" style="left:1501.50px;top:747px;font-size:16.5px;line-height:22px;color:#444444;">L</span>
<div class="a" style="left:1512px;top:747px;width:1px;height:22px;background:#dcdcdc;"></div>
<div class="a" style="left:1512px;top:770px;width:1px;height:138px;background:#d4d4d4;"></div>
<div class="a" style="left:99px;top:793px;width:33px;height:1px;background:#dcdcdc;"></div>
<div class="a" style="left:133px;top:793px;width:1379px;height:1px;background:#d4d4d4;"></div>
<div class="a" style="left:99px;top:817px;width:33px;height:1px;background:#dcdcdc;"></div>
<div class="a" style="left:133px;top:817px;width:1379px;height:1px;background:#d4d4d4;"></div>
<div class="a" style="left:99px;top:841px;width:33px;height:1px;background:#dcdcdc;"></div>
<div class="a" style="left:133px;top:841px;width:1379px;height:1px;background:#d4d4d4;"></div>
<div class="a" style="left:99px;top:865px;width:33px;height:1px;background:#dcdcdc;"></div>
<div class="a" style="left:133px;top:865px;width:1379px;height:1px;background:#d4d4d4;"></div>
<div class="a" style="left:99px;top:889px;width:33px;height:1px;background:#dcdcdc;"></div>
<div class="a" style="left:133px;top:889px;width:1379px;height:1px;background:#d4d4d4;"></div>
<span class="t" style="left:111.30px;top:771px;font-size:16.4px;line-height:22px;color:#444444;transform:scaleX(0.8548);transform-origin:0 0;">1</span>
<span class="t" style="left:111.30px;top:795px;font-size:16.4px;line-height:22px;color:#444444;transform:scaleX(0.8548);transform-origin:0 0;">2</span>
<span class="t" style="left:111.30px;top:819px;font-size:16.4px;line-height:22px;color:#444444;transform:scaleX(0.8548);transform-origin:0 0;">3</span>
<span class="t" style="left:111.30px;top:843px;font-size:16.4px;line-height:22px;color:#444444;transform:scaleX(0.8548);transform-origin:0 0;">4</span>
<span class="t" style="left:111.30px;top:867px;font-size:16.4px;line-height:22px;color:#444444;transform:scaleX(0.8548);transform-origin:0 0;">5</span>
<div class="a" style="left:99px;top:890px;width:33px;height:18px;overflow:hidden">
<span class="t" style="left:12.30px;top:1px;font-size:16.4px;line-height:22px;color:#444444;transform:scaleX(0.8548);transform-origin:0 0;">6</span>
</div>
<span class="t" style="left:136.30px;top:772px;font-size:15.6px;line-height:21px;color:#111;transform:scaleX(0.8859);transform-origin:0 0;-webkit-text-stroke:0.22px #111;">SN</span>
<span class="t" style="left:216.80px;top:772px;font-size:15.6px;line-height:21px;color:#111;transform:scaleX(1.0227);transform-origin:0 0;-webkit-text-stroke:0.22px #111;">Date</span>
<span class="t" style="left:296.30px;top:772px;font-size:15.6px;line-height:21px;color:#111;transform:scaleX(1.0413);transform-origin:0 0;-webkit-text-stroke:0.22px #111;">Trip Name</span>
<span class="t" style="left:376.30px;top:772px;font-size:15.6px;line-height:21px;color:#111;transform:scaleX(1.0493);transform-origin:0 0;-webkit-text-stroke:0.22px #111;">Vehicle Number</span>
<span class="t" style="left:598.80px;top:772px;font-size:15.6px;line-height:21px;color:#111;transform:scaleX(1.0289);transform-origin:0 0;-webkit-text-stroke:0.22px #111;">Dispatcher</span>
<span class="t" style="left:817.50px;top:772px;font-size:15.6px;line-height:21px;color:#111;transform:scaleX(1.0458);transform-origin:0 0;-webkit-text-stroke:0.22px #111;">Dispatcher Number</span>
<span class="t" style="left:1070.50px;top:772px;font-size:15.6px;line-height:21px;color:#111;transform:scaleX(1.0815);transform-origin:0 0;-webkit-text-stroke:0.22px #111;">Outlet</span>
<span class="t" style="left:1150.50px;top:772px;font-size:15.6px;line-height:21px;color:#111;transform:scaleX(1.0402);transform-origin:0 0;-webkit-text-stroke:0.22px #111;">Route</span>
<span class="t" style="left:199.50px;top:796px;font-size:15.6px;line-height:21px;color:#111;transform:scaleX(0.9784);transform-origin:0 0;-webkit-text-stroke:0.22px #111;">1</span>
<span class="t" style="left:217.50px;top:796px;font-size:15.6px;line-height:21px;color:#111;transform:scaleX(1.0275);transform-origin:0 0;-webkit-text-stroke:0.22px #111;">########</span>
<div class="a" style="left:293px;top:794px;width:79px;height:23px;overflow:hidden">
<span class="t" style="left:3.30px;top:2px;font-size:15.6px;line-height:21px;color:#111;transform:scaleX(1.0546);transform-origin:0 0;-webkit-text-stroke:0.22px #111;">Do Not Use Trip</span>
</div>
<span class="t" style="left:376.30px;top:796px;font-size:15.6px;line-height:21px;color:#111;transform:scaleX(1.0045);transform-origin:0 0;-webkit-text-stroke:0.22px #111;">Ba 5 pa 8989</span>
<div class="a" style="left:1067px;top:794px;width:79px;height:23px;overflow:hidden">
<span class="t" style="left:3.50px;top:2px;font-size:15.6px;line-height:21px;color:#111;transform:scaleX(1.0069);transform-origin:0 0;-webkit-text-stroke:0.22px #111;">S.N Colection</span>
</div>
<span class="t" style="left:1150.50px;top:796px;font-size:15.6px;line-height:21px;color:#111;transform:scaleX(1.0203);transform-origin:0 0;-webkit-text-stroke:0.22px #111;">QA Route</span>
<span class="t" style="left:199.50px;top:820px;font-size:15.6px;line-height:21px;color:#111;transform:scaleX(0.9784);transform-origin:0 0;-webkit-text-stroke:0.22px #111;">2</span>
<span class="t" style="left:217.50px;top:820px;font-size:15.6px;line-height:21px;color:#111;transform:scaleX(1.0275);transform-origin:0 0;-webkit-text-stroke:0.22px #111;">########</span>
<div class="a" style="left:293px;top:818px;width:79px;height:23px;overflow:hidden">
<span class="t" style="left:3.30px;top:2px;font-size:15.6px;line-height:21px;color:#111;transform:scaleX(1.0546);transform-origin:0 0;-webkit-text-stroke:0.22px #111;">Do Not Use Trip</span>
</div>
<span class="t" style="left:376.30px;top:820px;font-size:15.6px;line-height:21px;color:#111;transform:scaleX(1.0045);transform-origin:0 0;-webkit-text-stroke:0.22px #111;">Ba 5 pa 8989</span>
<div class="a" style="left:1067px;top:818px;width:79px;height:23px;overflow:hidden">
<span class="t" style="left:3.50px;top:2px;font-size:15.6px;line-height:21px;color:#111;transform:scaleX(1.0483);transform-origin:0 0;-webkit-text-stroke:0.22px #111;">Maharjan Cosmetics</span>
</div>
<span class="t" style="left:1150.50px;top:820px;font-size:15.6px;line-height:21px;color:#111;transform:scaleX(1.0203);transform-origin:0 0;-webkit-text-stroke:0.22px #111;">QA Route</span>
<div class="a" style="left:1511px;top:769px;width:1px;height:139px;background:#ababab;"></div>
<div class="a" style="left:1515px;top:766px;width:19px;height:125px;background:#f0f0f0;"></div>
<div class="a" style="left:1515px;top:748px;width:19px;height:19px;background:#fff;border:1px solid #c6c6c6;box-sizing:border-box;"></div>
<svg class="a" style="left:1520px;top:755px" width="9" height="5" viewBox="0 0 9 5"><path d="M0 5 L4.5 0 L9 5 Z" fill="#777"/></svg>
<div class="a" style="left:1515px;top:767px;width:19px;height:30px;background:#fff;border:1px solid #ababab;box-sizing:border-box;"></div>
<div class="a" style="left:1515px;top:890px;width:19px;height:18px;background:#fff;border:1px solid #c6c6c6;box-sizing:border-box;"></div>
<svg class="a" style="left:1520px;top:897px" width="9" height="5" viewBox="0 0 9 5"><path d="M0 0 L4.5 5 L9 0 Z" fill="#777"/></svg>
<div class="a" style="left:99px;top:908px;width:1438px;height:29px;background:#f5f5f5;"></div>
<div class="a" style="left:99px;top:908px;width:104px;height:1px;background:#ababab;"></div>
<div class="a" style="left:509px;top:908px;width:1003px;height:1px;background:#ababab;"></div>
<svg class="a" style="left:127px;top:917px" width="6" height="11" viewBox="0 0 6 11"><path d="M6 0 V11 L0 5.5 Z" fill="#c6c6c6"/></svg>
<svg class="a" style="left:155px;top:917px" width="6" height="11" viewBox="0 0 6 11"><path d="M0 0 V11 L6 5.5 Z" fill="#c6c6c6"/></svg>
<div class="a" style="left:202px;top:908px;width:307px;height:26px;background:#fff;border-left:1px solid #c6c6c6;border-right:1px solid #c6c6c6;box-sizing:border-box;"></div>
<div class="a" style="left:202px;top:932px;width:307px;height:2px;background:#217346;"></div>
<span class="t" style="left:214.30px;top:909px;font-size:16px;line-height:21px;color:#217346;font-weight:700;">TRIP_DETAILS_2023_12_04_07_02_5</span>
<svg class="a" style="left:541.5px;top:912.5px" width="21" height="21" viewBox="0 0 21 21"><circle cx="10.5" cy="10.5" r="9.3" stroke="#777" stroke-width="1.3" fill="none"/><path d="M10.5 5.5 V15.5 M5.5 10.5 H15.5" stroke="#666" stroke-width="1.6"/></svg>
<div class="a" style="left:959.7px;top:917px;width:1.3px;height:1.3px;background:#a0a0a0;"></div>
<div class="a" style="left:959.7px;top:922px;width:1.3px;height:1.3px;background:#a0a0a0;"></div>
<div class="a" style="left:959.7px;top:927px;width:1.3px;height:1.3px;background:#a0a0a0;"></div>
<div class="a" style="left:977px;top:913px;width:535px;height:19px;background:#e8e8e8;"></div>
<div class="a" style="left:977px;top:913px;width:19px;height:19px;background:#fff;border:1px solid #c6c6c6;box-sizing:border-box;"></div>
<svg class="a" style="left:983px;top:918.5px" width="5" height="9" viewBox="0 0 5 9"><path d="M5 0 V9 L0 4.5 Z" fill="#666"/></svg>
<div class="a" style="left:995px;top:913px;width:452px;height:19px;background:#fff;border:1px solid #c6c6c6;box-sizing:border-box;"></div>
<div class="a" style="left:1493px;top:913px;width:19px;height:19px;background:#fff;border:1px solid #c6c6c6;box-sizing:border-box;"></div>
<svg class="a" style="left:1500px;top:918.5px" width="5" height="9" viewBox="0 0 5 9"><path d="M0 0 V9 L5 4.5 Z" fill="#666"/></svg>
<div class="a" style="left:99px;top:937px;width:1438px;height:27px;background:#217346;"></div>
<span class="t" style="left:106.30px;top:941px;font-size:13.6px;line-height:19px;color:#fff;transform:scaleX(0.8155);transform-origin:0 0;">READY</span>
<div class="a" style="left:1186px;top:937px;width:41px;height:27px;background:#0f6a3b;"></div>
<svg class="a" style="left:1199px;top:943px" width="14" height="13" viewBox="0 0 14 13"><rect x="0.5" y="0.5" width="13" height="12" stroke="#fff" fill="none"/><path d="M4.5 0.5 V12.5 M9.5 0.5 V12.5 M0.5 4.5 H13.5 M0.5 8.5 H13.5" stroke="#fff" fill="none"/></svg>
<svg class="a" style="left:1240px;top:943px" width="15" height="13" viewBox="0 0 15 13"><rect x="0.5" y="0.5" width="14" height="12" stroke="#fff" fill="none"/><rect x="3.5" y="2.5" width="8" height="8" stroke="#fff" fill="none"/><path d="M5 5.5 H10 M5 7.5 H10" stroke="#fff"/></svg>
<svg class="a" style="left:1281px;top:943px" width="15" height="13" viewBox="0 0 15 13"><rect x="0.5" y="0.5" width="14" height="12" stroke="#fff" fill="none"/><rect x="1.5" y="0.5" width="3.5" height="7.5" fill="#fff"/><rect x="6" y="0.5" width="4" height="7.5" fill="#fff"/><path d="M0.5 8 H10" stroke="#fff"/></svg>
<div class="a" style="left:1313.5px;top:949px;width:9.5px;height:2px;background:#fff;"></div>
<div class="a" style="left:1327.5px;top:949.5px;width:124px;height:1px;background:#fff;"></div>
<div class="a" style="left:1387px;top:942.5px;width:5px;height:14px;background:#fff;"></div>
<div class="a" style="left:1456.5px;top:949px;width:11px;height:2px;background:#fff;"></div>
<div class="a" style="left:1461px;top:944.5px;width:2px;height:11px;background:#fff;"></div>
<span class="t" style="left:1483.80px;top:941px;font-size:13.6px;line-height:19px;color:#fff;transform:scaleX(0.8625);transform-origin:0 0;">100%</span>
<svg class="a" style="left:640px;top:820px" width="320" height="160" viewBox="640 820 320 160"><g stroke="#0a78d7" stroke-width="7" fill="none" stroke-linecap="round" stroke-linejoin="round"><path d="M650.5 898.5 Q659 889 670.5 878.5 Q685 867 695 857.5 Q700 851 703.5 846.5"/><path d="M659.5 842 Q668 840 682 842 Q703 845.5 722 851 Q733 854 738 857.5 Q734 862 727.5 870 Q724 874.5 720.5 878"/><path d="M946.5 966 Q936 950 925 930 Q913 907 905 887 Q897 866 894.5 855 Q893.5 849 893.3 844"/><path d="M861.5 865 Q863 856 869 845.5 Q874 836 880 832.5 Q886 831 893 833.5 Q905 840 915 847.5 Q922 852.5 927.5 858.5"/></g></svg>
<div class="a" style="left:0px;top:0px;width:1920px;height:43px;background:#6e1213;"></div>
<div class="a" style="left:0px;top:43px;width:1920px;height:53px;background:#a81d1f;"></div>
<div class="a" style="left:0px;top:95px;width:1920px;height:1px;background:#b43436;"></div>
<svg class="a" style="left:1180px;top:0" width="217.5" height="44" viewBox="0 0 217.5 44"><path d="M0 44 L0 43 Q10 43 10 33 L10 10 Q10 0 20 0 L197.5 0 Q207.5 0 207.5 10 L207.5 33 Q207.5 43 217.5 43 L217.5 44 Z" fill="#a81d1f"/></svg>
<svg class="a" style="left:26.3px;top:14px" width="19" height="14" viewBox="0 0 19 14"><path d="M0 2 V13 Q0 14 1 14 H4.2 V5.5 Z" fill="#4285f4"/><path d="M19 2 V13 Q19 14 18 14 H14.8 V5.5 Z" fill="#34a853"/><path d="M0 2 Q0 0.3 1.6 0.2 Q2.5 0.2 3.2 0.8 L4.2 1.6 V5.6 L0 2.6 Z" fill="#c5221f"/><path d="M19 2 Q19 0.3 17.4 0.2 Q16.5 0.2 15.8 0.8 L14.8 1.6 V5.6 L19 2.6 Z" fill="#fbbc04"/><path d="M4.2 1.6 L9.5 5.6 L14.8 1.6 V5.6 L9.5 9.6 L4.2 5.6 Z" fill="#ea4335"/></svg>
<div class="a" style="left:55.8px;top:8px;width:116px;height:28px;overflow:hidden;-webkit-mask-image:linear-gradient(90deg,#000 0,#000 84px,transparent 114px);mask-image:linear-gradient(90deg,#000 0,#000 84px,transparent 114px)">
<span class="t" style="left:0.00px;top:2px;font-size:15.8px;line-height:21px;color:#ecd2d2;transform:scaleX(0.9220);transform-origin:0 0;">Inbox (355) - shre</span>
</div>
<svg class="a" style="left:182.8px;top:15.5px" width="12" height="12" viewBox="0 0 12 12"><path d="M1.5 1.5 L10.5 10.5 M10.5 1.5 L1.5 10.5" stroke="#ecd2d2" stroke-width="1.7" fill="none"/></svg>
<div class="a" style="left:208px;top:9.5px;width:1px;height:24px;background:#a06a6a;"></div>
<svg class="a" style="left:222.8px;top:11px" width="20" height="20" viewBox="0 0 20 20"><rect width="20" height="20" rx="3" fill="#2aa84a"/><path d="M9.2 2.5 V17.5 M3 8 H17" stroke="#fff" stroke-width="2" fill="none"/></svg>
<div class="a" style="left:252.2px;top:8px;width:116px;height:28px;overflow:hidden;-webkit-mask-image:linear-gradient(90deg,#000 0,#000 84px,transparent 114px);mask-image:linear-gradient(90deg,#000 0,#000 84px,transparent 114px)">
<span class="t" style="left:0.00px;top:2px;font-size:15.8px;line-height:21px;color:#ecd2d2;transform:scaleX(0.9220);transform-origin:0 0;">LnD Dashboard M</span>
</div>
<svg class="a" style="left:379.2px;top:15.5px" width="12" height="12" viewBox="0 0 12 12"><path d="M1.5 1.5 L10.5 10.5 M10.5 1.5 L1.5 10.5" stroke="#ecd2d2" stroke-width="1.7" fill="none"/></svg>
<div class="a" style="left:405px;top:9.5px;width:1px;height:24px;background:#a06a6a;"></div>
<svg class="a" style="left:420.2px;top:11px" width="20" height="20" viewBox="0 0 20 20"><path d="M10 0.5 L19.5 10 L10 19.5 L0.5 10 Z" fill="#2684ff"/><path d="M10 7.6 L12.4 10 L10 12.4 L7.6 10 Z" fill="#6e1213"/><path d="M10 0.5 L14.5 5 L10 9.5 Z" fill="#1868db" opacity="0.55"/><path d="M10 19.5 L5.5 15 L10 10.5 Z" fill="#1868db" opacity="0.55"/></svg>
<div class="a" style="left:448.7px;top:8px;width:116px;height:28px;overflow:hidden;-webkit-mask-image:linear-gradient(90deg,#000 0,#000 84px,transparent 114px);mask-image:linear-gradient(90deg,#000 0,#000 84px,transparent 114px)">
<span class="t" style="left:0.00px;top:2px;font-size:15.8px;line-height:21px;color:#ecd2d2;transform:scaleX(0.9220);transform-origin:0 0;">[ROSIA-10390] L&amp;</span>
</div>
<svg class="a" style="left:575.6px;top:15.5px" width="12" height="12" viewBox="0 0 12 12"><path d="M1.5 1.5 L10.5 10.5 M10.5 1.5 L1.5 10.5" stroke="#ecd2d2" stroke-width="1.7" fill="none"/></svg>
<div class="a" style="left:601px;top:9.5px;width:1px;height:24px;background:#a06a6a;"></div>
<svg class="a" style="left:619.6px;top:12px" width="13" height="19" viewBox="0 0 13 19"><path d="M3.2 0 H6.5 V6.4 H3.2 A3.2 3.2 0 0 1 3.2 0 Z" fill="#f24e1e"/><path d="M6.5 0 H9.8 A3.2 3.2 0 0 1 9.8 6.4 H6.5 Z" fill="#ff7262"/><path d="M3.2 6.4 H6.5 V12.8 H3.2 A3.2 3.2 0 0 1 3.2 6.4 Z" fill="#a259ff"/><circle cx="9.8" cy="9.6" r="3.2" fill="#1abcfe"/><path d="M3.2 12.8 H6.5 V15.8 A3.2 3.2 0 1 1 3.2 12.8 Z" fill="#0acf83"/></svg>
<div class="a" style="left:645.1px;top:8px;width:116px;height:28px;overflow:hidden;-webkit-mask-image:linear-gradient(90deg,#000 0,#000 84px,transparent 114px);mask-image:linear-gradient(90deg,#000 0,#000 84px,transparent 114px)">
<span class="t" style="left:0.00px;top:2px;font-size:15.8px;line-height:21px;color:#ecd2d2;transform:scaleX(0.9220);transform-origin:0 0;">Logistics And Del</span>
</div>
<svg class="a" style="left:772.0px;top:15.5px" width="12" height="12" viewBox="0 0 12 12"><path d="M1.5 1.5 L10.5 10.5 M10.5 1.5 L1.5 10.5" stroke="#ecd2d2" stroke-width="1.7" fill="none"/></svg>
<div class="a" style="left:798px;top:9.5px;width:1px;height:24px;background:#a06a6a;"></div>
<svg class="a" style="left:812.1px;top:11px" width="20" height="20" viewBox="0 0 20 20"><rect width="20" height="20" rx="3" fill="#2aa84a"/><path d="M9.2 2.5 V17.5 M3 8 H17" stroke="#fff" stroke-width="2" fill="none"/></svg>
<div class="a" style="left:841.5px;top:8px;width:116px;height:28px;overflow:hidden;-webkit-mask-image:linear-gradient(90deg,#000 0,#000 84px,transparent 114px);mask-image:linear-gradient(90deg,#000 0,#000 84px,transparent 114px)">
<span class="t" style="left:0.00px;top:2px;font-size:15.8px;line-height:21px;color:#ecd2d2;transform:scaleX(0.9220);transform-origin:0 0;">L&amp;D Dashboard T</span>
</div>
<svg class="a" style="left:968.5px;top:15.5px" width="12" height="12" viewBox="0 0 12 12"><path d="M1.5 1.5 L10.5 10.5 M10.5 1.5 L1.5 10.5" stroke="#ecd2d2" stroke-width="1.7" fill="none"/></svg>
<div class="a" style="left:994px;top:9.5px;width:1px;height:24px;background:#a06a6a;"></div>
<svg class="a" style="left:1008.2px;top:10.2px" width="21.5" height="21.5" viewBox="0 0 32 32"><circle cx="16" cy="16" r="14.6" stroke="#9a2f7c" stroke-width="1.4" fill="none"/><path d="M1.3 16.5 Q3 19 5.5 18 Q8 16.8 11 13.5 Q15.5 8.5 20.6 7.2 Q26 6.5 29 11.8 Q30 14 30.1 16 L29.2 15.1 Q28.5 12 24.3 10.9 Q21.5 10.8 18 14.5 Q14 18.5 10.4 20.6 Q6 23.2 2.6 20.6 Q1.3 19 1.3 16.5Z" fill="#c9349f"/><path d="M2.6 12.3 Q6 9 10.9 13" stroke="#9a2f7c" stroke-width="0.8" fill="none"/><path d="M13.2 18.8 Q16 24.5 21 24.8 Q25 24.6 27.6 22.9" stroke="#9a2f7c" stroke-width="0.8" fill="none"/></svg>
<div class="a" style="left:1038.0px;top:8px;width:116px;height:28px;overflow:hidden;-webkit-mask-image:linear-gradient(90deg,#000 0,#000 84px,transparent 114px);mask-image:linear-gradient(90deg,#000 0,#000 84px,transparent 114px)">
<span class="t" style="left:0.00px;top:2px;font-size:15.8px;line-height:21px;color:#ecd2d2;transform:scaleX(0.9220);transform-origin:0 0;">Logistics &amp; Delive</span>
</div>
<svg class="a" style="left:1164.9px;top:15.5px" width="12" height="12" viewBox="0 0 12 12"><path d="M1.5 1.5 L10.5 10.5 M10.5 1.5 L1.5 10.5" stroke="#ecd2d2" stroke-width="1.7" fill="none"/></svg>
<svg class="a" style="left:1204.6px;top:10.2px" width="21.5" height="21.5" viewBox="0 0 32 32"><circle cx="16" cy="16" r="14.6" stroke="#9a2f7c" stroke-width="1.4" fill="none"/><path d="M1.3 16.5 Q3 19 5.5 18 Q8 16.8 11 13.5 Q15.5 8.5 20.6 7.2 Q26 6.5 29 11.8 Q30 14 30.1 16 L29.2 15.1 Q28.5 12 24.3 10.9 Q21.5 10.8 18 14.5 Q14 18.5 10.4 20.6 Q6 23.2 2.6 20.6 Q1.3 19 1.3 16.5Z" fill="#c9349f"/><path d="M2.6 12.3 Q6 9 10.9 13" stroke="#9a2f7c" stroke-width="0.8" fill="none"/><path d="M13.2 18.8 Q16 24.5 21 24.8 Q25 24.6 27.6 22.9" stroke="#9a2f7c" stroke-width="0.8" fill="none"/></svg>
<div class="a" style="left:1234.4px;top:8px;width:116px;height:28px;overflow:hidden;-webkit-mask-image:linear-gradient(90deg,#000 0,#000 84px,transparent 114px);mask-image:linear-gradient(90deg,#000 0,#000 84px,transparent 114px)">
<span class="t" style="left:0.00px;top:2px;font-size:15.8px;line-height:21px;color:#ffffff;transform:scaleX(0.9220);transform-origin:0 0;">Logistics &amp; Delive</span>
</div>
<svg class="a" style="left:1361.3px;top:15.5px" width="12" height="12" viewBox="0 0 12 12"><path d="M1.5 1.5 L10.5 10.5 M10.5 1.5 L1.5 10.5" stroke="#ffffff" stroke-width="1.7" fill="none"/></svg>
<svg class="a" style="left:1401.0px;top:10.2px" width="21.5" height="21.5" viewBox="0 0 32 32"><circle cx="16" cy="16" r="14.6" stroke="#9a2f7c" stroke-width="1.4" fill="none"/><path d="M1.3 16.5 Q3 19 5.5 18 Q8 16.8 11 13.5 Q15.5 8.5 20.6 7.2 Q26 6.5 29 11.8 Q30 14 30.1 16 L29.2 15.1 Q28.5 12 24.3 10.9 Q21.5 10.8 18 14.5 Q14 18.5 10.4 20.6 Q6 23.2 2.6 20.6 Q1.3 19 1.3 16.5Z" fill="#c9349f"/><path d="M2.6 12.3 Q6 9 10.9 13" stroke="#9a2f7c" stroke-width="0.8" fill="none"/><path d="M13.2 18.8 Q16 24.5 21 24.8 Q25 24.6 27.6 22.9" stroke="#9a2f7c" stroke-width="0.8" fill="none"/></svg>
<div class="a" style="left:1430.8px;top:8px;width:116px;height:28px;overflow:hidden;-webkit-mask-image:linear-gradient(90deg,#000 0,#000 84px,transparent 114px);mask-image:linear-gradient(90deg,#000 0,#000 84px,transparent 114px)">
<span class="t" style="left:0.00px;top:2px;font-size:15.8px;line-height:21px;color:#ecd2d2;transform:scaleX(0.9220);transform-origin:0 0;">ROSIA DMS</span>
</div>
<svg class="a" style="left:1557.8px;top:15.5px" width="12" height="12" viewBox="0 0 12 12"><path d="M1.5 1.5 L10.5 10.5 M10.5 1.5 L1.5 10.5" stroke="#ecd2d2" stroke-width="1.7" fill="none"/></svg>
<div class="a" style="left:1583px;top:9.5px;width:1px;height:24px;background:#a06a6a;"></div>
<svg class="a" style="left:1603.5px;top:13.5px" width="16" height="16" viewBox="0 0 16 16"><path d="M8 0.5 V15.5 M0.5 8 H15.5" stroke="#fff" stroke-width="2" fill="none"/></svg>
<svg class="a" style="left:1712px;top:13px" width="16" height="12" viewBox="0 0 16 12"><path d="M1 2 L7.5 8.5 L14 2" stroke="#a35656" stroke-width="1.2" fill="none"/></svg>
<div class="a" style="left:1770px;top:18px;width:13px;height:1px;background:#a35656;"></div>
<svg class="a" style="left:1826px;top:12px" width="15" height="14" viewBox="0 0 15 14"><path d="M0.5 3.5 H10.5 V13.5 H0.5 Z M3.5 3.5 V0.5 H13.5 V10.5 H10.5" stroke="#a35656" stroke-width="1" fill="none"/></svg>
<svg class="a" style="left:1884px;top:12px" width="14" height="14" viewBox="0 0 14 14"><path d="M0.5 0.5 L13.5 13.5 M13.5 0.5 L0.5 13.5" stroke="#a35656" stroke-width="1.1" fill="none"/></svg>
<svg class="a" style="left:19px;top:60px" width="18" height="18" viewBox="0 0 18 18"><path d="M16.5 9 H2.5 M9 2 L2 9 L9 16" stroke="#fff" stroke-width="2" fill="none"/></svg>
<svg class="a" style="left:59px;top:60px" width="18" height="18" viewBox="0 0 18 18"><path d="M1.5 9 H15.5 M9 2 L16 9 L9 16" stroke="#d07f80" stroke-width="2" fill="none"/></svg>
<svg class="a" style="left:98px;top:58px" width="20" height="20" viewBox="0 0 20 20"><path d="M16.2 6.2 A7.2 7.2 0 1 0 17.2 11.5" stroke="#fff" stroke-width="2" fill="none"/><path d="M17.8 2.2 V8.3 H11.7 Z" fill="#fff"/></svg>
<div class="a" style="left:135px;top:48px;width:1422px;height:43px;background:#861e20;border-radius:22px;"></div>
<svg class="a" style="left:152.3px;top:63px" width="10.5" height="14" viewBox="0 0 12 16"><path d="M3 7 V4.5 A3 3 0 0 1 9 4.5 V7" stroke="#b9bcc0" stroke-width="1.8" fill="none"/><rect x="0.5" y="6.5" width="11" height="9" rx="1.2" fill="#b9bcc0"/></svg>
<span class="t" style="left:178.00px;top:58px;font-size:17.3px;line-height:24px;color:#ffffff;transform:scaleX(0.9782);transform-origin:0 0;">qa.lnd.rosia.one</span>
<span class="t" style="left:298.30px;top:58px;font-size:17.3px;line-height:24px;color:#e2a6a2;transform:scaleX(1.0308);transform-origin:0 0;">/dashboard/scheduled-trips/details/8b4cd94b-11e9-4b4a-97b3-768782a8f9ff</span>
<svg class="a" style="left:1445px;top:60px" width="19" height="19" viewBox="0 0 19 19"><path d="M5 2 H2.5 Q1.5 2 1.5 3 V12.5 Q1.5 13.5 2.5 13.5 H16.5 Q17.5 13.5 17.5 12.5 V3 Q17.5 2 16.5 2 H14" stroke="#cfb8b8" stroke-width="1.6" fill="none"/><path d="M9.5 1 V9.5 M5.8 6 L9.5 9.8 L13.2 6" stroke="#cfb8b8" stroke-width="1.6" fill="none"/><path d="M5 17 H14" stroke="#cfb8b8" stroke-width="2" fill="none"/></svg>
<svg class="a" style="left:1484px;top:60px" width="20" height="19" viewBox="0 0 20 19"><path d="M6 7.5 H2 V17.5 H14.5 V13.5" stroke="#cfb8b8" stroke-width="1.5" fill="none"/><path d="M12 2 L18.5 7.5 L12 13 V9.8 Q7 9.8 4.5 14 Q5 6.5 12 5.5 Z" stroke="#cfb8b8" stroke-width="1.5" fill="none" stroke-linejoin="round"/></svg>
<svg class="a" style="left:1524px;top:59px" width="20" height="20" viewBox="0 0 20 20"><path d="M10 1.8 L12.5 7.4 L18.6 8 L14 12.1 L15.3 18.1 L10 15 L4.7 18.1 L6 12.1 L1.4 8 L7.5 7.4 Z" stroke="#cfb8b8" stroke-width="1.6" fill="none" stroke-linejoin="round"/></svg>
<svg class="a" style="left:1574px;top:59px" width="20" height="20" viewBox="0 0 20 20"><path d="M8.2 3.2 A2.1 2.1 0 0 1 12.4 3.2 V4.4 H15.4 Q16.4 4.4 16.4 5.4 V8.2 H17.2 A2.2 2.2 0 0 1 17.2 12.6 H16.4 V16.4 Q16.4 17.4 15.4 17.4 H12.2 V16.4 A2.1 2.1 0 0 0 8 16.4 V17.4 H4 Q3 17.4 3 16.4 V12.8 H4 A2.2 2.2 0 0 0 4 8.4 H3 V5.4 Q3 4.4 4 4.4 H8.2 Z" fill="#fff"/></svg>
<svg class="a" style="left:1614px;top:58px" width="20" height="22" viewBox="0 0 20 22"><path d="M10 1 V13 M4.5 8 L10 13.5 L15.5 8" stroke="#fff" stroke-width="2.2" fill="none"/><path d="M1.5 15 V18.5 Q1.5 19.5 2.5 19.5 H17.5 Q18.5 19.5 18.5 18.5 V15" stroke="#fff" stroke-width="2.2" fill="none"/></svg>
<svg class="a" style="left:1655px;top:60px" width="17" height="17" viewBox="0 0 17 17"><rect x="1" y="1" width="15" height="15" stroke="#fff" stroke-width="2" fill="none"/><rect x="9" y="1" width="7" height="15" fill="#fff"/></svg>
<svg class="a" style="left:1690px;top:55px" width="28" height="28" viewBox="0 0 28 28"><defs><clipPath id="avc"><circle cx="14" cy="14" r="13.9"/></clipPath><linearGradient id="avw" x1="0" y1="0" x2="0" y2="1"><stop offset="0" stop-color="#2a9fe4"/><stop offset="1" stop-color="#4ad8ee"/></linearGradient></defs><g clip-path="url(#avc)"><rect width="28" height="28" fill="#1b7be6"/><path d="M2 8 Q2.5 2.5 7 2.2 Q10.5 3 9.8 6.5 Q8 8.6 5 8 Z" fill="#fff"/><path d="M3 13 Q8 11.5 12 13.5 L27.5 12 V20.5 H3 Z" fill="#eef3f7"/><path d="M0 8.6 Q5 7.6 9.6 10 Q6 10.6 4.5 12.5 Q8 12.6 9.5 14.5 Q5 14.4 3 17.4 L0 17Z" fill="#2d6f74"/><path d="M0 11 Q4 10.5 7.5 12.5" stroke="#6f9a56" stroke-width="0.8" fill="none"/><path d="M17 4.5 Q21 3 24.5 5 Q27 7 28 10 L28 13 Q25 10.5 22.5 10.8 Q24 9 23 7.5 Q20.5 6.8 17.5 7.2 Q19 5.8 17 4.5Z" fill="#2d6f74"/><path d="M18.5 5.6 Q22.5 5.4 25.5 8.2" stroke="#6f9a56" stroke-width="0.8" fill="none"/><path d="M14.7 4 L8.8 16.6 L13.3 15.9 Z" fill="#fbd12e"/><path d="M15.5 4.4 L14 15.9 H19.9 Z" fill="#2340c8"/><rect x="8.3" y="17.6" width="11.6" height="1.2" rx="0.6" fill="#f0674a"/><path d="M5.9 18.8 H22.9 L22 20 H7 Z" fill="#fff"/><path d="M5.9 19.9 H23.6 L22.5 21.1 H7 Z" fill="#1c3fb0"/><rect y="21" width="28" height="7" fill="url(#avw)"/><path d="M14 22.6 H20 M17 24.6 H21" stroke="#2b8fe0" stroke-width="0.7"/></g></svg>
<div class="a" style="left:1726px;top:51px;width:184px;height:35px;background:#a52220;border:1px solid #f3c44a;border-radius:18px;box-sizing:border-box;"></div>
<span class="t" style="left:1743.00px;top:58px;font-size:15.6px;line-height:21px;color:#fdd663;transform:scaleX(0.9486);transform-origin:0 0;">Relaunch to update</span>
<div class="a" style="left:1890.5px;top:61.4px;width:3.4px;height:3.4px;background:#fdd663;border-radius:50%;"></div>
<div class="a" style="left:1890.5px;top:67.4px;width:3.4px;height:3.4px;background:#fdd663;border-radius:50%;"></div>
<div class="a" style="left:1890.5px;top:73.4px;width:3.4px;height:3.4px;background:#fdd663;border-radius:50%;"></div>
<div class="a" style="left:0px;top:1030px;width:1920px;height:50px;background:linear-gradient(90deg,#24363e 0%,#22343f 52%,#1e2c43 72%,#1b2641 100%);"></div>
<svg class="a" style="left:19.5px;top:1044.5px" width="21" height="21" viewBox="0 0 21 21"><path d="M0 3 L8.6 1.8 V10 H0 Z M9.8 1.6 L21 0 V10 H9.8 Z M0 11.2 H8.6 V19.4 L0 18.2 Z M9.8 11.2 H21 V21 L9.8 19.5 Z" fill="#fff"/></svg>
<div class="a" style="left:60px;top:1030px;width:360px;height:50px;background:#f3f3f3;border-top:1px solid #bdbdbd;box-sizing:border-box;"></div>
<svg class="a" style="left:74px;top:1043px" width="23" height="23" viewBox="0 0 23 23"><circle cx="14" cy="9" r="6.6" stroke="#222" stroke-width="1.6" fill="none"/><path d="M9.3 13.7 L1.5 21.5" stroke="#222" stroke-width="1.8"/></svg>
<span class="t" style="left:110.50px;top:1043px;font-size:19px;line-height:25px;color:#2b2b2b;transform:scaleX(0.9706);transform-origin:0 0;">Type here to search</span>
<svg class="a" style="left:318px;top:1034px" width="102" height="46" viewBox="318 1034 102 46"><defs><linearGradient id="hill" x1="0" y1="0" x2="1" y2="0"><stop offset="0" stop-color="#a6b958"/><stop offset="0.45" stop-color="#bfc265"/><stop offset="1" stop-color="#ddd073"/></linearGradient><radialGradient id="hsh" cx="0.5" cy="0.5" r="0.5"><stop offset="0" stop-color="#8f9f4a" stop-opacity="0.9"/><stop offset="1" stop-color="#8f9f4a" stop-opacity="0"/></radialGradient><linearGradient id="chb" x1="0" y1="0" x2="0" y2="1"><stop offset="0" stop-color="#e6b368"/><stop offset="1" stop-color="#f0c884"/></linearGradient></defs><path d="M320 1080 Q338 1070.6 362 1070.6 H420 V1080 Z" fill="url(#hill)"/><ellipse cx="372" cy="1075.6" rx="26" ry="3.4" fill="url(#hsh)"/><path d="M334.9 1048.5 L336 1043.2 L337.5 1040.3 L339 1042.2 L342 1042 L344.3 1040.2 L346 1042.8 L347.5 1044 Q351 1044.6 355 1045.5 Q362 1047.6 367.7 1048.3 Q373 1047.6 378 1046 Q383 1044 386.7 1044.1 Q389.5 1044.6 391 1046 Q393.5 1048.3 394.8 1050 Q399 1051.6 403 1052.2 Q409 1053 415.3 1053 L416 1054.6 Q410 1055 405 1054.6 Q399 1054 394 1052.6 Q396 1054.6 399 1056 Q402.5 1057.6 405 1059.5 Q408.5 1061.8 411.3 1064 L411 1066 L408.5 1064.5 L404 1061.5 Q407 1065.5 408.6 1069 L408.3 1071.5 L406.3 1070.5 Q404.5 1067 402 1064 Q400 1062 398 1060.5 Q395.5 1059.2 393 1058.5 Q389 1059.2 385 1059.3 Q380 1058.4 375 1058.4 Q369.5 1060.4 364.5 1061.8 Q358.5 1062 353 1061.2 L351.8 1059.5 Q347.5 1061 343.5 1062.6 Q338.5 1065 334 1067 L330.2 1065.5 L330.3 1064 L335 1062 L334.8 1060.5 L335.5 1059 Q340 1058 345 1057.3 Q347 1056.4 348 1055 L346.7 1052.5 Q343.5 1052.8 340 1052.8 L337 1052.3 Z" fill="url(#chb)"/><path d="M354 1054.2 Q360 1056.6 365 1056.6 Q369 1056.6 372 1056 Q369.5 1058.8 366 1060.5 Q360 1061 355 1060 Q353 1057 354 1054.2Z" fill="#f6e2b6"/><path d="M337 1052.3 L340 1052.8 L341.5 1050.6 L338 1050.4Z" fill="#f7ead0"/><g fill="#7a4a1e"><circle cx="348.4" cy="1048" r="0.55"/><circle cx="348.5" cy="1051.5" r="0.55"/><circle cx="355" cy="1048.5" r="0.55"/><circle cx="358" cy="1052.5" r="0.55"/><circle cx="360" cy="1049.5" r="0.55"/><circle cx="363" cy="1050.2" r="0.55"/><circle cx="365" cy="1053.5" r="0.55"/><circle cx="367.5" cy="1050.6" r="0.55"/><circle cx="369.5" cy="1053.8" r="0.55"/><circle cx="371.5" cy="1049.6" r="0.55"/><circle cx="363.5" cy="1055.5" r="0.55"/><circle cx="358.5" cy="1054.6" r="0.5"/><circle cx="385.3" cy="1056.6" r="0.55"/><circle cx="404" cy="1053.5" r="0.75"/><circle cx="407.8" cy="1053.9" r="0.8"/><circle cx="411.6" cy="1054" r="0.85"/><circle cx="336.2" cy="1049.2" r="0.7"/><path d="M338 1046.2 L340.6 1045.6" stroke="#7a4a1e" stroke-width="0.6"/><circle cx="338.7" cy="1043" r="0.45"/><circle cx="341" cy="1043.6" r="0.4"/></g></svg>
<svg class="a" style="left:439px;top:1044px" width="23" height="21" viewBox="0 0 23 21"><rect x="1.7" y="4.6" width="11.6" height="11.6" stroke="#fff" stroke-width="1.4" fill="none"/><path d="M1 3.2 V1.6 H14 V3.2 M1 17.6 V19.2 H14 V17.6" stroke="#fff" stroke-width="1.3" fill="none"/><path d="M19.1 0.8 V19.8" stroke="#fff" stroke-width="1.3"/><rect x="17.7" y="6.4" width="2.9" height="3.6" fill="#fff"/></svg>
<svg class="a" style="left:499px;top:1039px" width="30" height="30" viewBox="0 0 30 30"><defs><linearGradient id="eg1" x1="0" y1="0.2" x2="1" y2="0.6"><stop offset="0" stop-color="#2bb7d6"/><stop offset="0.6" stop-color="#4fd08a"/><stop offset="1" stop-color="#7de04f"/></linearGradient><linearGradient id="eg2" x1="0" y1="0" x2="0.3" y2="1"><stop offset="0" stop-color="#1f9fe6"/><stop offset="1" stop-color="#0b56a8"/></linearGradient></defs><path d="M15 0.6 A14.4 14.4 0 0 1 29.4 14 Q29.4 20 23.5 20.2 Q19 20.3 18.2 18 Q21 16 20 13 Q18 9.5 13 10 Q6 11 4.2 17 Q0.6 14 0.9 11 A14.4 14.4 0 0 1 15 0.6Z" fill="url(#eg1)"/><path d="M0.8 12.5 Q1.5 8 5 5 Q2.5 10 4 16.5 Q6 24 13.5 27 Q20 29 26.8 23.2 Q22 30.2 13.5 29.3 Q3 27.5 0.7 17 Q0.4 14.5 0.8 12.5Z" fill="url(#eg2)"/><path d="M4 16.8 Q5.5 11 12 10 Q18 9.6 19.8 13 Q20.6 16 18.2 18 Q16.3 22 20.5 24.3 Q24 25.6 26.9 23.1 Q20 29.5 13 27 Q5.5 24 4 16.8Z" fill="#1467c4"/><path d="M8.6 17.5 Q8.6 24.5 15.5 27.6 Q8 27.5 5.5 21 Q5.2 18 8.6 17.5Z" fill="#0c4a9a"/></svg>
<svg class="a" style="left:561.5px;top:1042px" width="29" height="25" viewBox="0 0 29 25"><path d="M0.5 2 Q0.5 0.5 2 0.5 H10.5 L12.5 3.2 H26.5 Q28 3.2 28 4.7 V8 H0.5 Z" fill="#e8a90c"/><path d="M0.5 5.8 H12 L13.5 4.2 H26.5 Q28 4.2 28 5.7 V20.5 Q28 22 26.5 22 H2 Q0.5 22 0.5 20.5 Z" fill="#fcd462"/><path d="M5.5 14 Q5.5 12.3 7.2 12.3 H21.5 Q23.2 12.3 23.2 14 V23.5 H5.5 Z" fill="#3b8ee0"/><rect x="9.8" y="18" width="9.4" height="5.5" fill="#fcd462"/></svg>
<svg class="a" style="left:623px;top:1040px" width="29" height="30" viewBox="0 0 29 30"><path d="M8 7 V4 Q8 1.5 10.5 1.5 H18.5 Q21 1.5 21 4 V7" stroke="#3f9fe8" stroke-width="2" fill="none"/><rect x="0.5" y="6" width="28" height="23.5" rx="3" fill="#f2f2f2"/><rect x="9" y="12" width="5" height="5" fill="#f25022"/><rect x="15" y="12" width="5" height="5" fill="#7fba00"/><rect x="9" y="18" width="5" height="5" fill="#00a4ef"/><rect x="15" y="18" width="5" height="5" fill="#ffb900"/></svg>
<svg class="a" style="left:684.5px;top:1040px" width="31" height="29" viewBox="0 0 31 29"><path d="M0.5 11 L15.5 0.5 L30.5 11 V28.5 H0.5 Z" fill="#0f64b4"/><path d="M3 9 H28 V20 H3 Z" fill="#eaf2fa"/><path d="M0.5 11 L15.5 21 L30.5 11 V28.5 H0.5 Z" fill="#2b9cf0"/><path d="M0.5 28.5 L15.5 19 L30.5 28.5 Z" fill="#1a82d8"/></svg>
<svg class="a" style="left:747px;top:1040px" width="30" height="30" viewBox="0 0 30 30"><circle cx="15" cy="15" r="13.7" fill="#fff" stroke="#48b2bf" stroke-width="1.7"/><path d="M10.3 27.2 Q10.8 22 13 19.2 Q15 16.8 18 17.8 L20.3 19.8 L22.3 15.5 L22.8 20 Q22.6 24.5 20 27.8 Q15 29.6 10.3 27.2Z" fill="#3b2a26"/><path d="M19.6 21 L21.8 19.5 L21.5 24 L19.8 24.3Z" fill="#fff"/><path d="M17.3 8.6 Q20.3 7 23 8.4 Q22.6 11.2 20 12 Q18 10.9 17.3 8.6Z" fill="#3b2a26"/><circle cx="13.2" cy="8.8" r="0.95" fill="#3b2a26"/><path d="M4.3 19.8 Q3.4 14 5.6 10.4 Q8.4 6 15.2 4.2" stroke="#3b2a26" stroke-width="1" fill="none"/><path d="M3.8 12.3 Q4.8 9.8 6.2 11.8 Q6.2 14.2 4.4 14.4Z" fill="#3b2a26"/><path d="M14.5 14.8 Q17.5 16.5 21.5 14.2" stroke="#3b2a26" stroke-width="0.8" fill="none"/></svg>
<svg class="a" style="left:809px;top:1039px" width="32" height="32" viewBox="0 0 32 32"><circle cx="15" cy="15" r="14" fill="#fff"/><path d="M15 1 A14 14 0 0 1 27.1 8 H15 A7 7 0 0 0 8.9 11.5 L2.9 8 A14 14 0 0 1 15 1Z" fill="#ea4335"/><path d="M27.1 8 A14 14 0 0 1 15 29 L21 18.5 A7 7 0 0 0 21 11.5 Z" fill="#fbbc04"/><path d="M2.9 8 L8.9 18.5 A7 7 0 0 0 15 22 L15 29 A14 14 0 0 1 2.9 8Z" fill="#34a853"/><circle cx="15" cy="15" r="5.6" fill="#4285f4" stroke="#fff" stroke-width="1.4"/><circle cx="23" cy="23" r="8.5" fill="#3f7fd0" stroke="#c9d6ea" stroke-width="1"/><path d="M23 16.5 L19.5 26 H23 Z" fill="#f6c22d"/><path d="M23.8 17.5 V26 H28 Z" fill="#fff"/><path d="M16 27 H30 L28 30 H18Z" fill="#35c3e0"/></svg>
<svg class="a" style="left:871.5px;top:1040px" width="30" height="30" viewBox="0 0 30 30"><circle cx="15" cy="15" r="13.7" fill="#fff" stroke="#48b2bf" stroke-width="1.7"/><path d="M10.3 27.2 Q10.8 22 13 19.2 Q15 16.8 18 17.8 L20.3 19.8 L22.3 15.5 L22.8 20 Q22.6 24.5 20 27.8 Q15 29.6 10.3 27.2Z" fill="#3b2a26"/><path d="M19.6 21 L21.8 19.5 L21.5 24 L19.8 24.3Z" fill="#fff"/><path d="M17.3 8.6 Q20.3 7 23 8.4 Q22.6 11.2 20 12 Q18 10.9 17.3 8.6Z" fill="#3b2a26"/><circle cx="13.2" cy="8.8" r="0.95" fill="#3b2a26"/><path d="M4.3 19.8 Q3.4 14 5.6 10.4 Q8.4 6 15.2 4.2" stroke="#3b2a26" stroke-width="1" fill="none"/><path d="M3.8 12.3 Q4.8 9.8 6.2 11.8 Q6.2 14.2 4.4 14.4Z" fill="#3b2a26"/><path d="M14.5 14.8 Q17.5 16.5 21.5 14.2" stroke="#3b2a26" stroke-width="0.8" fill="none"/></svg>
<svg class="a" style="left:932px;top:1040px" width="30" height="30" viewBox="0 0 30 30"><path d="M10 4 L26 1.5 L27.5 24 L12 28 Z" fill="#e9d8a8"/><path d="M8 5 L24 2 L22.5 24 L2.5 27.5 Z" fill="#9fd0e8"/><path d="M8 5 L24 2 L23.6 8 L6.8 11Z" fill="#d7ecf6"/><path d="M9 3.5 V6.5 M12 3 V6 M15 2.5 V5.5 M18 2 V5 M21 1.5 V4.5" stroke="#666" stroke-width="1"/><path d="M2.5 27.5 L22.5 24 L24 27 L5 30Z" fill="#7fb3cf"/></svg>
<div class="a" style="left:980px;top:1030px;width:61px;height:50px;background:rgba(255,255,255,0.16);"></div>
<svg class="a" style="left:996px;top:1041px" width="28" height="27" viewBox="0 0 28 27"><rect x="12" y="3.5" width="15.5" height="20" fill="#fff" stroke="#217346" stroke-width="1"/><path d="M16 7.5 H25 M16 11.5 H25 M16 15.5 H25 M16 19.5 H25 M20.5 4 V23" stroke="#217346" stroke-width="1.2" fill="none"/><path d="M0 3 L16 0 V27 L0 24 Z" fill="#217346"/><path d="M3.8 8 L6.6 8 L8.3 11.8 L10.2 8 L12.8 8 L9.7 13.5 L13 19 L10.2 19 L8.3 15.2 L6.4 19 L3.7 19 L7 13.5 Z" fill="#fff"/></svg>
<div class="a" style="left:799px;top:1078px;width:51px;height:2px;background:#76b9ed;"></div>
<div class="a" style="left:839.5px;top:1078px;width:10.5px;height:2px;background:#5f94c4;"></div>
<div class="a" style="left:861px;top:1078px;width:51px;height:2px;background:#76b9ed;"></div>
<div class="a" style="left:923px;top:1078px;width:51px;height:2px;background:#76b9ed;"></div>
<div class="a" style="left:980px;top:1078px;width:61px;height:2px;background:#76b9ed;"></div>
<svg class="a" style="left:1469px;top:1041px" width="32" height="28" viewBox="0 0 32 28"><defs><linearGradient id="sun" x1="0" y1="0" x2="0" y2="1"><stop offset="0" stop-color="#ffd23a"/><stop offset="1" stop-color="#f08a1c"/></linearGradient></defs><circle cx="16" cy="14" r="12.5" fill="url(#sun)"/><g stroke="#f6e2b8" stroke-width="2.2" stroke-linecap="round"><path d="M8 8 H30"/><path d="M2 13 H18"/><path d="M12 18 H25"/><path d="M1 23 H22"/></g></svg>
<span class="t" style="left:1510.00px;top:1044px;font-size:18.2px;line-height:24px;color:#fff;transform:scaleX(0.8932);transform-origin:0 0;">65°F</span>
<span class="t" style="left:1555.20px;top:1044px;font-size:18.2px;line-height:24px;color:#fff;font-weight:700;transform:scaleX(0.9419);transform-origin:0 0;">Haze</span>
<svg class="a" style="left:1626px;top:1050px" width="18" height="10" viewBox="0 0 18 10"><path d="M1 9 L9 1 L17 9" stroke="#fff" stroke-width="1.5" fill="none"/></svg>
<svg class="a" style="left:1658px;top:1045px" width="17" height="20" viewBox="0 0 17 20"><rect x="1" y="5" width="9.5" height="10" rx="1.5" stroke="#fff" stroke-width="1.2" fill="none"/><path d="M10.5 8.5 L15.5 6 V14 L10.5 11.5" stroke="#fff" stroke-width="1.2" fill="none"/><path d="M3 2 Q7.5 -0.5 12 2 M3 18 Q7.5 20.5 12 18" stroke="#fff" stroke-width="1" fill="none"/></svg>
<svg class="a" style="left:1685px;top:1050px" width="21" height="11" viewBox="0 0 21 11"><rect x="0.6" y="0.6" width="17.8" height="9.8" rx="1" stroke="#fff" stroke-width="1.2" fill="none"/><rect x="2.5" y="2.5" width="14" height="6" fill="#fff"/><rect x="19" y="3.5" width="1.8" height="4" fill="#fff"/></svg>
<svg class="a" style="left:1717px;top:1046px" width="18" height="18" viewBox="0 0 18 18"><g stroke="#fff" stroke-width="1.3" fill="none"><path d="M1 16 A15 15 0 0 1 16 1"/><path d="M5 16 A11 11 0 0 1 16 5"/><path d="M9 16 A7 7 0 0 1 16 9"/></g><circle cx="14.5" cy="14.8" r="1.8" fill="#fff"/></svg>
<svg class="a" style="left:1745px;top:1045px" width="21" height="19" viewBox="0 0 21 19"><path d="M1 6.5 H4.5 L9 2 V17 L4.5 12.5 H1 Z" stroke="#fff" stroke-width="1.2" fill="none" stroke-linejoin="round"/><path d="M12 6.5 Q14 9.5 12 12.5 M14.5 4.5 Q18 9.5 14.5 14.5 M17 2.5 Q22 9.5 17 16.5" stroke="#fff" stroke-width="1.2" fill="none"/></svg>
<span class="t" style="left:1782.80px;top:1033px;font-size:15.4px;line-height:21px;color:#fff;transform:scaleX(0.8954);transform-origin:0 0;">12:48 PM</span>
<span class="t" style="left:1779.00px;top:1057px;font-size:15.4px;line-height:21px;color:#fff;transform:scaleX(0.9710);transform-origin:0 0;">12/4/2023</span>
<svg class="a" style="left:1868px;top:1045px" width="32" height="32" viewBox="0 0 32 32"><path d="M1 1 H21 V16 H5.5 L1 20.5 Z" fill="#fff"/><path d="M4.5 5.5 H17.5 M4.5 9 H17.5 M4.5 12.5 H14" stroke="#1b2340" stroke-width="1"/><circle cx="20.6" cy="20" r="9.6" fill="#3a3f52" stroke="#1b2340" stroke-width="1"/><text x="16.6" y="25.4" font-family="Liberation Sans" font-weight="700" font-size="14.5" fill="#fff">3</text></svg>
<div class="a" style="left:1913.5px;top:1030px;width:1px;height:50px;background:#6a6f82;"></div>
</body></html>
